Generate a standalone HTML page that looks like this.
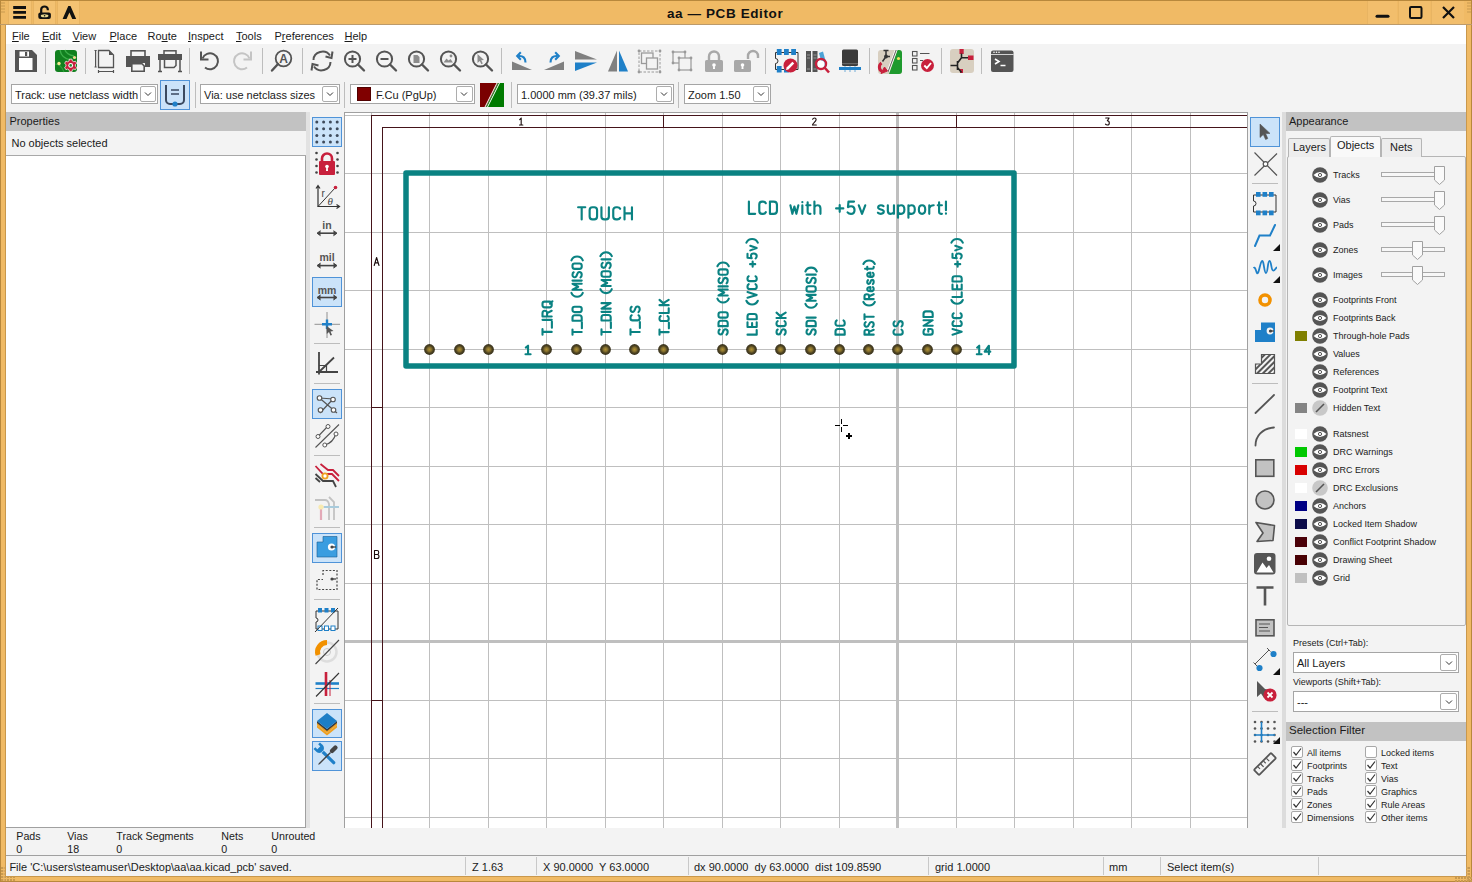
<!DOCTYPE html><html><head><meta charset="utf-8"><style>

*{box-sizing:border-box;margin:0;padding:0}
html,body{width:1472px;height:882px;overflow:hidden}
body{position:relative;background:#F0BA65;font-family:"Liberation Sans",sans-serif;font-size:11px;color:#1a1a1a}
.a{position:absolute}
.t{white-space:pre;line-height:1}
.u{text-decoration:underline;text-underline-offset:0.8px}

</style></head><body>
<div class="a" style="left:0px;top:0px;width:1472px;height:882px;border:1px solid #B8883C"></div><div class="a" style="left:0px;top:24px;width:1472px;height:1px;background:#BC9A6A"></div><div class="a" style="left:5px;top:25px;width:1px;height:852px;background:#C9984C"></div><div class="a" style="left:1466px;top:25px;width:1px;height:852px;background:#C9984C"></div><div class="a" style="left:5px;top:876px;width:1462px;height:1px;background:#C9984C"></div><div class="a t" style="left:667px;top:6.6px;font-weight:bold;font-size:13.5px;letter-spacing:0.6px;color:#111">aa — PCB Editor</div><div class="a" style="left:8px;top:1px;width:24px;height:23px;background:#F4C272;border-left:1px solid #E8B462;border-right:1px solid #E8B462"></div><div class="a" style="left:33px;top:1px;width:23px;height:23px;background:#F4C272;border-left:1px solid #E8B462;border-right:1px solid #E8B462"></div><div class="a" style="left:57px;top:1px;width:23px;height:23px;background:#F4C272;border-left:1px solid #E8B462;border-right:1px solid #E8B462"></div><div class="a" style="left:1367px;top:1px;width:30px;height:23px;background:#F2BE6C;border-left:1px solid #E8B462"></div><div class="a" style="left:1398px;top:1px;width:32px;height:23px;background:#F2BE6C;border-left:1px solid #E8B462"></div><div class="a" style="left:1431px;top:1px;width:33px;height:23px;background:#F2BE6C;border-left:1px solid #E8B462"></div><svg class="a" style="left:0;top:0" width="1472" height="25"><path d="M13.2 7.5 H26 M13.2 12.4 H26 M13.2 17.3 H26" stroke="#111" stroke-width="2.8"/><path d="M41.2 13 V9.5 A3.3 3 0 0 1 47.8 9.5 V10.3" fill="none" stroke="#111" stroke-width="2.2"/><rect x="38.3" y="12.6" width="12.6" height="6.4" rx="2" fill="#111"/><ellipse cx="44.6" cy="15.8" rx="3.8" ry="1.5" fill="#E8D890"/><circle cx="44.6" cy="15.8" r="0.8" fill="#111"/><path d="M62.6 19 L68.3 6 H70.5 L76.2 19 H72.3 L69.4 12.6 L66.5 19 Z" fill="#111"/><path d="M1377 16.3 H1388" stroke="#111" stroke-width="3" stroke-linecap="round"/><rect x="1410" y="7" width="11.5" height="11" rx="1.2" fill="none" stroke="#111" stroke-width="2"/><path d="M1443 7 L1454 18 M1454 7 L1443 18" stroke="#111" stroke-width="2.2"/><path d="M1 3 H5 M1 6 H5 M1 9 H5 M1 12 H5 M1467 3 H1471 M1467 6 H1471 M1467 9 H1471 M1467 12 H1471" stroke="#C89A50" stroke-width="1"/></svg><svg class="a" style="left:0;top:862px" width="1472" height="20"><rect x="1" y="14" width="2" height="2" fill="#C89A50"/><rect x="1" y="17" width="2" height="2" fill="#C89A50"/><rect x="4" y="14" width="2" height="2" fill="#C89A50"/><rect x="4" y="17" width="2" height="2" fill="#C89A50"/><rect x="7" y="14" width="2" height="2" fill="#C89A50"/><rect x="7" y="17" width="2" height="2" fill="#C89A50"/><rect x="10" y="14" width="2" height="2" fill="#C89A50"/><rect x="10" y="17" width="2" height="2" fill="#C89A50"/><rect x="13" y="14" width="2" height="2" fill="#C89A50"/><rect x="13" y="17" width="2" height="2" fill="#C89A50"/><rect x="1" y="5" width="2" height="2" fill="#C89A50"/><rect x="3.5" y="5" width="1.5" height="2" fill="#D8A860"/><rect x="1468" y="5" width="2" height="2" fill="#C89A50"/><rect x="1466.5" y="5" width="1.5" height="2" fill="#D8A860"/><rect x="1" y="8" width="2" height="2" fill="#C89A50"/><rect x="3.5" y="8" width="1.5" height="2" fill="#D8A860"/><rect x="1468" y="8" width="2" height="2" fill="#C89A50"/><rect x="1466.5" y="8" width="1.5" height="2" fill="#D8A860"/><rect x="1" y="11" width="2" height="2" fill="#C89A50"/><rect x="3.5" y="11" width="1.5" height="2" fill="#D8A860"/><rect x="1468" y="11" width="2" height="2" fill="#C89A50"/><rect x="1466.5" y="11" width="1.5" height="2" fill="#D8A860"/><rect x="1" y="14" width="2" height="2" fill="#C89A50"/><rect x="3.5" y="14" width="1.5" height="2" fill="#D8A860"/><rect x="1468" y="14" width="2" height="2" fill="#C89A50"/><rect x="1466.5" y="14" width="1.5" height="2" fill="#D8A860"/><rect x="1" y="17" width="2" height="2" fill="#C89A50"/><rect x="3.5" y="17" width="1.5" height="2" fill="#D8A860"/><rect x="1468" y="17" width="2" height="2" fill="#C89A50"/><rect x="1466.5" y="17" width="1.5" height="2" fill="#D8A860"/><rect x="1455" y="15" width="2" height="2" fill="#C89A50"/><rect x="1455" y="18" width="2" height="2" fill="#C89A50"/><rect x="1458" y="15" width="2" height="2" fill="#C89A50"/><rect x="1458" y="18" width="2" height="2" fill="#C89A50"/><rect x="1461" y="15" width="2" height="2" fill="#C89A50"/><rect x="1461" y="18" width="2" height="2" fill="#C89A50"/><rect x="1464" y="15" width="2" height="2" fill="#C89A50"/><rect x="1464" y="18" width="2" height="2" fill="#C89A50"/><rect x="1467" y="15" width="2" height="2" fill="#C89A50"/><rect x="1467" y="18" width="2" height="2" fill="#C89A50"/><rect x="1470" y="15" width="2" height="2" fill="#C89A50"/><rect x="1470" y="18" width="2" height="2" fill="#C89A50"/><rect x="1461" y="3" width="1.5" height="1.5" fill="#A8A8B0"/><rect x="1458" y="6" width="1.5" height="1.5" fill="#A8A8B0"/><rect x="1461" y="6" width="1.5" height="1.5" fill="#A8A8B0"/><rect x="1455" y="9" width="1.5" height="1.5" fill="#A8A8B0"/><rect x="1458" y="9" width="1.5" height="1.5" fill="#A8A8B0"/><rect x="1461" y="9" width="1.5" height="1.5" fill="#A8A8B0"/></svg>
<div class="a" style="left:6px;top:25px;width:1460px;height:19px;background:#fff"></div><div class="a t" style="left:12px;top:30.69px;font-size:11px;color:#1a1a1a;"><span class="u">F</span>ile</div><div class="a t" style="left:42px;top:30.69px;font-size:11px;color:#1a1a1a;"><span class="u">E</span>dit</div><div class="a t" style="left:72.5px;top:30.69px;font-size:11px;color:#1a1a1a;"><span class="u">V</span>iew</div><div class="a t" style="left:109.5px;top:30.69px;font-size:11px;color:#1a1a1a;"><span class="u">P</span>lace</div><div class="a t" style="left:147.5px;top:30.69px;font-size:11px;color:#1a1a1a;">Ro<span class="u">u</span>te</div><div class="a t" style="left:188px;top:30.69px;font-size:11px;color:#1a1a1a;"><span class="u">I</span>nspect</div><div class="a t" style="left:236px;top:30.69px;font-size:11px;color:#1a1a1a;"><span class="u">T</span>ools</div><div class="a t" style="left:274.5px;top:30.69px;font-size:11px;color:#1a1a1a;">P<span class="u">r</span>eferences</div><div class="a t" style="left:344.5px;top:30.69px;font-size:11px;color:#1a1a1a;"><span class="u">H</span>elp</div>
<div class="a" style="left:6px;top:44px;width:1460px;height:68px;background:#F3F3F3"></div><div class="a" style="left:11px;top:84px;width:147px;height:20px;background:#fff;border:1px solid #A5A5A5"></div><div class="a t" style="left:15px;top:90.29px;font-size:11px;color:#1a1a1a;">Track: use netclass width</div><div class="a" style="left:139.5px;top:86px;width:16.0px;height:16px;background:#fff;border:1px solid #ADADAD;border-radius:2px"></div><svg class="a" style="left:142.5px;top:90.0px" width="10" height="8"><path d="M2 2.5 L5 5.5 L8 2.5" fill="none" stroke="#333" stroke-width="1"/></svg><div class="a" style="left:200px;top:84px;width:140px;height:20px;background:#fff;border:1px solid #A5A5A5"></div><div class="a t" style="left:204px;top:90.29px;font-size:11px;color:#1a1a1a;">Via: use netclass sizes</div><div class="a" style="left:321.5px;top:86px;width:16.0px;height:16px;background:#fff;border:1px solid #ADADAD;border-radius:2px"></div><svg class="a" style="left:324.5px;top:90.0px" width="10" height="8"><path d="M2 2.5 L5 5.5 L8 2.5" fill="none" stroke="#333" stroke-width="1"/></svg><div class="a" style="left:350px;top:84px;width:125px;height:20px;background:#fff;border:1px solid #A5A5A5"></div><div class="a t" style="left:376px;top:90.29px;font-size:11px;color:#1a1a1a;">F.Cu (PgUp)</div><div class="a" style="left:456px;top:86px;width:16.5px;height:16px;background:#fff;border:1px solid #ADADAD;border-radius:2px"></div><svg class="a" style="left:459.25px;top:90.0px" width="10" height="8"><path d="M2 2.5 L5 5.5 L8 2.5" fill="none" stroke="#333" stroke-width="1"/></svg><div class="a" style="left:357px;top:87px;width:14px;height:14px;background:#800000;border:1px solid #500000"></div><div class="a" style="left:517px;top:84px;width:157px;height:20px;background:#fff;border:1px solid #A5A5A5"></div><div class="a t" style="left:521px;top:90.29px;font-size:11px;color:#1a1a1a;">1.0000 mm (39.37 mils)</div><div class="a" style="left:655.5px;top:86px;width:16.0px;height:16px;background:#fff;border:1px solid #ADADAD;border-radius:2px"></div><svg class="a" style="left:658.5px;top:90.0px" width="10" height="8"><path d="M2 2.5 L5 5.5 L8 2.5" fill="none" stroke="#333" stroke-width="1"/></svg><div class="a" style="left:684px;top:84px;width:87px;height:20px;background:#fff;border:1px solid #A5A5A5"></div><div class="a t" style="left:688px;top:90.29px;font-size:11px;color:#1a1a1a;">Zoom 1.50</div><div class="a" style="left:752.5px;top:86px;width:16.0px;height:16px;background:#fff;border:1px solid #ADADAD;border-radius:2px"></div><svg class="a" style="left:755.5px;top:90.0px" width="10" height="8"><path d="M2 2.5 L5 5.5 L8 2.5" fill="none" stroke="#333" stroke-width="1"/></svg>
<div class="a" style="left:6px;top:112px;width:300px;height:716px;background:#fff;border-right:1px solid #A0A0A0;border-bottom:1px solid #A0A0A0"></div><div class="a" style="left:6px;top:112px;width:300px;height:19px;background:#C2C2C2"></div><div class="a t" style="left:9.5px;top:115.69px;font-size:11px;color:#1a1a1a;">Properties</div><div class="a" style="left:6px;top:131px;width:300px;height:25px;background:#F3F3F3;border-bottom:1px solid #A8A8A8"></div><div class="a t" style="left:11.5px;top:137.69px;font-size:11px;color:#1a1a1a;">No objects selected</div><div class="a" style="left:306px;top:112px;width:4px;height:716px;background:#E2E2E2"></div><div class="a" style="left:310px;top:112px;width:34px;height:716px;background:#F3F3F3"></div>
<svg class="a" style="left:344px;top:112px" width="904" height="716" viewBox="344 112 904 716">
<rect x="344" y="112" width="904" height="716" fill="#fff"/>
<g shape-rendering="crispEdges" fill="#BFBFBF"><rect x="371" y="112" width="1" height="716"/><rect x="429" y="112" width="1" height="716"/><rect x="488" y="112" width="1" height="716"/><rect x="546" y="112" width="1" height="716"/><rect x="605" y="112" width="1" height="716"/><rect x="663" y="112" width="1" height="716"/><rect x="722" y="112" width="1" height="716"/><rect x="780" y="112" width="1" height="716"/><rect x="839" y="112" width="1" height="716"/><rect x="896" y="112" width="3" height="716"/><rect x="956" y="112" width="1" height="716"/><rect x="1014" y="112" width="1" height="716"/><rect x="1073" y="112" width="1" height="716"/><rect x="1131" y="112" width="1" height="716"/><rect x="1190" y="112" width="1" height="716"/><rect x="344" y="115" width="904" height="1"/><rect x="344" y="173" width="904" height="1"/><rect x="344" y="232" width="904" height="1"/><rect x="344" y="290" width="904" height="1"/><rect x="344" y="349" width="904" height="1"/><rect x="344" y="407" width="904" height="1"/><rect x="344" y="466" width="904" height="1"/><rect x="344" y="524" width="904" height="1"/><rect x="344" y="583" width="904" height="1"/><rect x="344" y="640" width="904" height="3"/><rect x="344" y="700" width="904" height="1"/><rect x="344" y="758" width="904" height="1"/><rect x="344" y="817" width="904" height="1"/></g>
<g shape-rendering="crispEdges" fill="#45141A"><rect x="371" y="115" width="877" height="1"/><rect x="382" y="127" width="866" height="1"/><rect x="371" y="115" width="1" height="713"/><rect x="382" y="127" width="1" height="701"/><rect x="663" y="115" width="1" height="12"/><rect x="956" y="115" width="1" height="12"/><rect x="371" y="407" width="12" height="1"/><rect x="371" y="700" width="12" height="1"/></g>
<g transform="translate(519.50,118.00) scale(0.7000,0.7000)" fill="none" stroke="#1a0a0a" stroke-width="1.1" stroke-linecap="round" stroke-linejoin="round"><path transform="translate(0.00,0)" d="M0.3 2.3L2.4 0V10M0 10H4.8" vector-effect="non-scaling-stroke"/></g>
<g transform="translate(812.50,118.00) scale(0.7000,0.7000)" fill="none" stroke="#1a0a0a" stroke-width="1.1" stroke-linecap="round" stroke-linejoin="round"><path transform="translate(0.00,0)" d="M0.2 1.8C0.7 0.6 1.6 0 2.8 0C4.3 0 5.2 1 5.2 2.6C5.2 5 0 7.5 0 10H5.4" vector-effect="non-scaling-stroke"/></g>
<g transform="translate(1105.50,118.00) scale(0.7000,0.7000)" fill="none" stroke="#1a0a0a" stroke-width="1.1" stroke-linecap="round" stroke-linejoin="round"><path transform="translate(0.00,0)" d="M0.3 0H5.2L2.6 4C4.3 4 5.4 5 5.4 7C5.4 9 4.3 10 2.7 10C1.5 10 0.6 9.6 0 8.8" vector-effect="non-scaling-stroke"/></g>
<g transform="translate(374.20,257.50) scale(0.8000,0.8000)" fill="none" stroke="#1a0a0a" stroke-width="1.1" stroke-linecap="round" stroke-linejoin="round"><path transform="translate(0.00,0)" d="M0 10L3 0L6 10M1 6.7H5" vector-effect="non-scaling-stroke"/></g>
<g transform="translate(374.50,550.50) scale(0.8000,0.8000)" fill="none" stroke="#1a0a0a" stroke-width="1.1" stroke-linecap="round" stroke-linejoin="round"><path transform="translate(0.00,0)" d="M0 0H3.2C4.6 0 5.3 0.8 5.3 2.4C5.3 4 4.6 5 3.2 5H0M3.2 5C4.8 5 5.6 5.9 5.6 7.5C5.6 9.1 4.8 10 3.2 10H0V0" vector-effect="non-scaling-stroke"/></g>
<rect x="406" y="173" width="608" height="193" fill="none" stroke="#0A8282" stroke-width="5.5" stroke-linejoin="round"/>
<defs><radialGradient id="pg"><stop offset="0" stop-color="#B09030"/><stop offset="0.35" stop-color="#8A7430"/><stop offset="0.7" stop-color="#4A4020"/><stop offset="1" stop-color="#3A3420"/></radialGradient></defs>
<g fill="url(#pg)"><circle cx="429.5" cy="349.5" r="5.4"/><circle cx="459.5" cy="349.5" r="5.4"/><circle cx="488.5" cy="349.5" r="5.4"/><circle cx="546.5" cy="349.5" r="5.4"/><circle cx="576.5" cy="349.5" r="5.4"/><circle cx="605.5" cy="349.5" r="5.4"/><circle cx="634.5" cy="349.5" r="5.4"/><circle cx="663.5" cy="349.5" r="5.4"/><circle cx="722.5" cy="349.5" r="5.4"/><circle cx="751.5" cy="349.5" r="5.4"/><circle cx="780.5" cy="349.5" r="5.4"/><circle cx="810.5" cy="349.5" r="5.4"/><circle cx="839.5" cy="349.5" r="5.4"/><circle cx="868.5" cy="349.5" r="5.4"/><circle cx="897.5" cy="349.5" r="5.4"/><circle cx="927.5" cy="349.5" r="5.4"/><circle cx="956.5" cy="349.5" r="5.4"/></g>
<g transform="translate(578.10,207.20) scale(1.3264,1.2200)" fill="none" stroke="#0A8282" stroke-width="2.15" stroke-linecap="round" stroke-linejoin="round"><path transform="translate(0.00,0)" d="M0 0H5.4M2.7 0V10" vector-effect="non-scaling-stroke"/><path transform="translate(8.70,0)" d="M2.1 0H3.5C4.9 0 5.6 0.8 5.6 2.3V7.7C5.6 9.2 4.9 10 3.5 10H2.1C0.7 10 0 9.2 0 7.7V2.3C0 0.8 0.7 0 2.1 0Z" vector-effect="non-scaling-stroke"/><path transform="translate(17.60,0)" d="M0 0V7.7C0 9.2 0.8 10 2.2 10H3.4C4.8 10 5.6 9.2 5.6 7.7V0" vector-effect="non-scaling-stroke"/><path transform="translate(26.50,0)" d="M5.2 1.3C4.8 0.4 4 0 3 0H2.2C0.9 0 0 0.9 0 2.3V7.7C0 9.1 0.9 10 2.2 10H3C4 10 4.8 9.6 5.2 8.7" vector-effect="non-scaling-stroke"/><path transform="translate(35.00,0)" d="M0 0V10M5.6 0V10M0 5H5.6" vector-effect="non-scaling-stroke"/></g><g transform="translate(748.90,201.60) scale(1.2522,1.2200)" fill="none" stroke="#0A8282" stroke-width="2.15" stroke-linecap="round" stroke-linejoin="round"><path transform="translate(0.00,0)" d="M0 0V10H5" vector-effect="non-scaling-stroke"/><path transform="translate(8.30,0)" d="M5.2 1.3C4.8 0.4 4 0 3 0H2.2C0.9 0 0 0.9 0 2.3V7.7C0 9.1 0.9 10 2.2 10H3C4 10 4.8 9.6 5.2 8.7" vector-effect="non-scaling-stroke"/><path transform="translate(16.80,0)" d="M0 0H3C4.6 0 5.6 1 5.6 2.6V7.4C5.6 9 4.6 10 3 10H0Z" vector-effect="non-scaling-stroke"/></g><g transform="translate(790.40,201.60) scale(1.2068,1.2200)" fill="none" stroke="#0A8282" stroke-width="2.15" stroke-linecap="round" stroke-linejoin="round"><path transform="translate(0.00,0)" d="M0 3L1.65 10L3.3 4L4.95 10L6.6 3" vector-effect="non-scaling-stroke"/><path transform="translate(9.90,0)" d="M0 3V10M0 0.3V0.5" vector-effect="non-scaling-stroke"/><path transform="translate(13.20,0)" d="M1.1 0.6V8.4C1.1 9.5 1.6 10 2.6 10H3.4M0 3H3.4" vector-effect="non-scaling-stroke"/><path transform="translate(19.90,0)" d="M0 0V10M0 4.6C0.6 3.5 1.5 3 2.6 3C4.2 3 5 4 5 5.6V10" vector-effect="non-scaling-stroke"/></g><g transform="translate(836.10,201.60) scale(1.2898,1.2200)" fill="none" stroke="#0A8282" stroke-width="2.15" stroke-linecap="round" stroke-linejoin="round"><path transform="translate(0.00,0)" d="M0 5.6H5.6M2.8 2.8V8.4" vector-effect="non-scaling-stroke"/><path transform="translate(8.90,0)" d="M5 0H0.7L0.3 4.6C0.9 4.1 1.7 3.8 2.8 3.8C4.5 3.8 5.4 4.9 5.4 6.8C5.4 8.8 4.4 10 2.6 10C1.5 10 0.6 9.6 0 8.8" vector-effect="non-scaling-stroke"/><path transform="translate(17.60,0)" d="M0 3L2.5 10L5 3" vector-effect="non-scaling-stroke"/></g><g transform="translate(877.90,201.60) scale(1.2261,1.2200)" fill="none" stroke="#0A8282" stroke-width="2.15" stroke-linecap="round" stroke-linejoin="round"><path transform="translate(0.00,0)" d="M4.6 3.8C4.1 3.2 3.4 3 2.4 3C1.1 3 0.2 3.6 0.2 4.8C0.2 7 4.8 6 4.8 8.2C4.8 9.4 3.8 10 2.4 10C1.4 10 0.6 9.7 0 9.1" vector-effect="non-scaling-stroke"/><path transform="translate(8.10,0)" d="M0 3V7.4C0 9.2 0.8 10 2.3 10C3.5 10 4.5 9.5 5 8.4M5 3V10" vector-effect="non-scaling-stroke"/><path transform="translate(16.40,0)" d="M0 3V13.2M0 4.2C0.6 3.4 1.4 3 2.5 3C4.2 3 5.2 4.3 5.2 6.5C5.2 8.8 4.2 10 2.5 10C1.4 10 0.6 9.6 0 8.8" vector-effect="non-scaling-stroke"/><path transform="translate(24.90,0)" d="M0 3V13.2M0 4.2C0.6 3.4 1.4 3 2.5 3C4.2 3 5.2 4.3 5.2 6.5C5.2 8.8 4.2 10 2.5 10C1.4 10 0.6 9.6 0 8.8" vector-effect="non-scaling-stroke"/><path transform="translate(33.40,0)" d="M2.6 3C4.2 3 5.2 4.3 5.2 6.5C5.2 8.7 4.2 10 2.6 10C1 10 0 8.7 0 6.5C0 4.3 1 3 2.6 3Z" vector-effect="non-scaling-stroke"/><path transform="translate(41.90,0)" d="M0 3V10M0 5.4C0.6 3.8 1.8 3 3.6 3" vector-effect="non-scaling-stroke"/><path transform="translate(48.80,0)" d="M1.1 0.6V8.4C1.1 9.5 1.6 10 2.6 10H3.4M0 3H3.4" vector-effect="non-scaling-stroke"/><path transform="translate(55.50,0)" d="M0 0V7M0 9.7V9.9" vector-effect="non-scaling-stroke"/></g><g transform="translate(525.50,345.70) scale(1.0652,0.8500)" fill="none" stroke="#0A8282" stroke-width="2.1" stroke-linecap="round" stroke-linejoin="round"><path transform="translate(0.00,0)" d="M0.3 2.3L2.4 0V10M0 10H4.8" vector-effect="non-scaling-stroke"/></g><g transform="translate(976.80,345.70) scale(1.0000,0.8500)" fill="none" stroke="#0A8282" stroke-width="2.1" stroke-linecap="round" stroke-linejoin="round"><path transform="translate(0.00,0)" d="M0.3 2.3L2.4 0V10M0 10H4.8" vector-effect="non-scaling-stroke"/><path transform="translate(7.90,0)" d="M4.2 10V0L0 7H5.6" vector-effect="non-scaling-stroke"/></g><g transform="translate(542.50,334.65) rotate(-90) scale(1.0217,0.9200)" fill="none" stroke="#0A8282" stroke-width="2.1" stroke-linecap="round" stroke-linejoin="round"><path transform="translate(0.00,0)" d="M0 0H5.4M2.7 0V10" vector-effect="non-scaling-stroke"/><path transform="translate(6.70,0)" d="M0 10.2H6" vector-effect="non-scaling-stroke"/><path transform="translate(14.50,0)" d="M0 0V10" vector-effect="non-scaling-stroke"/><path transform="translate(17.80,0)" d="M0 10V0H3.2C4.7 0 5.6 1 5.6 2.5C5.6 4 4.7 5 3.2 5H0M3.2 5L5.6 10" vector-effect="non-scaling-stroke"/><path transform="translate(26.70,0)" d="M2.1 0H3.5C4.9 0 5.6 0.8 5.6 2.3V7.7C5.6 9.2 4.9 10 3.5 10H2.1C0.7 10 0 9.2 0 7.7V2.3C0 0.8 0.7 0 2.1 0ZM3.6 8.2L5.9 10.8" vector-effect="non-scaling-stroke"/></g><g transform="translate(572.50,334.65) rotate(-90) scale(0.9631,0.9200)" fill="none" stroke="#0A8282" stroke-width="2.1" stroke-linecap="round" stroke-linejoin="round"><path transform="translate(0.00,0)" d="M0 0H5.4M2.7 0V10" vector-effect="non-scaling-stroke"/><path transform="translate(6.70,0)" d="M0 10.2H6" vector-effect="non-scaling-stroke"/><path transform="translate(14.50,0)" d="M0 0H3C4.6 0 5.6 1 5.6 2.6V7.4C5.6 9 4.6 10 3 10H0Z" vector-effect="non-scaling-stroke"/><path transform="translate(23.40,0)" d="M2.1 0H3.5C4.9 0 5.6 0.8 5.6 2.3V7.7C5.6 9.2 4.9 10 3.5 10H2.1C0.7 10 0 9.2 0 7.7V2.3C0 0.8 0.7 0 2.1 0Z" vector-effect="non-scaling-stroke"/><path transform="translate(39.30,0)" d="M4 -1.2A6.8 6.8 0 0 0 4 11.2" vector-effect="non-scaling-stroke"/><path transform="translate(46.60,0)" d="M0 10V0L3.1 6.2L6.2 0V10" vector-effect="non-scaling-stroke"/><path transform="translate(56.10,0)" d="M0 0V10" vector-effect="non-scaling-stroke"/><path transform="translate(59.40,0)" d="M5.4 1.3C4.9 0.4 4 0 2.8 0C1.1 0 0.2 1 0.2 2.5C0.2 5.5 5.6 4.3 5.6 7.4C5.6 9 4.6 10 2.8 10C1.6 10 0.6 9.6 0 8.7" vector-effect="non-scaling-stroke"/><path transform="translate(68.30,0)" d="M2.1 0H3.5C4.9 0 5.6 0.8 5.6 2.3V7.7C5.6 9.2 4.9 10 3.5 10H2.1C0.7 10 0 9.2 0 7.7V2.3C0 0.8 0.7 0 2.1 0Z" vector-effect="non-scaling-stroke"/><path transform="translate(77.20,0)" d="M0 -1.2A6.8 6.8 0 0 1 0 11.2" vector-effect="non-scaling-stroke"/></g><g transform="translate(601.50,334.65) rotate(-90) scale(0.9751,0.9200)" fill="none" stroke="#0A8282" stroke-width="2.1" stroke-linecap="round" stroke-linejoin="round"><path transform="translate(0.00,0)" d="M0 0H5.4M2.7 0V10" vector-effect="non-scaling-stroke"/><path transform="translate(6.70,0)" d="M0 10.2H6" vector-effect="non-scaling-stroke"/><path transform="translate(14.50,0)" d="M0 0H3C4.6 0 5.6 1 5.6 2.6V7.4C5.6 9 4.6 10 3 10H0Z" vector-effect="non-scaling-stroke"/><path transform="translate(23.40,0)" d="M0 0V10" vector-effect="non-scaling-stroke"/><path transform="translate(26.70,0)" d="M0 10V0L5.6 10V0" vector-effect="non-scaling-stroke"/><path transform="translate(42.60,0)" d="M4 -1.2A6.8 6.8 0 0 0 4 11.2" vector-effect="non-scaling-stroke"/><path transform="translate(49.90,0)" d="M0 10V0L3.1 6.2L6.2 0V10" vector-effect="non-scaling-stroke"/><path transform="translate(59.40,0)" d="M2.1 0H3.5C4.9 0 5.6 0.8 5.6 2.3V7.7C5.6 9.2 4.9 10 3.5 10H2.1C0.7 10 0 9.2 0 7.7V2.3C0 0.8 0.7 0 2.1 0Z" vector-effect="non-scaling-stroke"/><path transform="translate(68.30,0)" d="M5.4 1.3C4.9 0.4 4 0 2.8 0C1.1 0 0.2 1 0.2 2.5C0.2 5.5 5.6 4.3 5.6 7.4C5.6 9 4.6 10 2.8 10C1.6 10 0.6 9.6 0 8.7" vector-effect="non-scaling-stroke"/><path transform="translate(77.20,0)" d="M0 0V10" vector-effect="non-scaling-stroke"/><path transform="translate(80.50,0)" d="M0 -1.2A6.8 6.8 0 0 1 0 11.2" vector-effect="non-scaling-stroke"/></g><g transform="translate(630.50,334.65) rotate(-90) scale(0.9825,0.9200)" fill="none" stroke="#0A8282" stroke-width="2.1" stroke-linecap="round" stroke-linejoin="round"><path transform="translate(0.00,0)" d="M0 0H5.4M2.7 0V10" vector-effect="non-scaling-stroke"/><path transform="translate(6.70,0)" d="M0 10.2H6" vector-effect="non-scaling-stroke"/><path transform="translate(14.50,0)" d="M5.2 1.3C4.8 0.4 4 0 3 0H2.2C0.9 0 0 0.9 0 2.3V7.7C0 9.1 0.9 10 2.2 10H3C4 10 4.8 9.6 5.2 8.7" vector-effect="non-scaling-stroke"/><path transform="translate(23.00,0)" d="M5.4 1.3C4.9 0.4 4 0 2.8 0C1.1 0 0.2 1 0.2 2.5C0.2 5.5 5.6 4.3 5.6 7.4C5.6 9 4.6 10 2.8 10C1.6 10 0.6 9.6 0 8.7" vector-effect="non-scaling-stroke"/></g><g transform="translate(659.50,334.65) rotate(-90) scale(0.9431,0.9200)" fill="none" stroke="#0A8282" stroke-width="2.1" stroke-linecap="round" stroke-linejoin="round"><path transform="translate(0.00,0)" d="M0 0H5.4M2.7 0V10" vector-effect="non-scaling-stroke"/><path transform="translate(6.70,0)" d="M0 10.2H6" vector-effect="non-scaling-stroke"/><path transform="translate(14.50,0)" d="M5.2 1.3C4.8 0.4 4 0 3 0H2.2C0.9 0 0 0.9 0 2.3V7.7C0 9.1 0.9 10 2.2 10H3C4 10 4.8 9.6 5.2 8.7" vector-effect="non-scaling-stroke"/><path transform="translate(23.00,0)" d="M0 0V10H5" vector-effect="non-scaling-stroke"/><path transform="translate(31.30,0)" d="M0 0V10M5.6 0L0 6.4M2.1 4.2L5.6 10" vector-effect="non-scaling-stroke"/></g><g transform="translate(718.50,334.65) rotate(-90) scale(0.9550,0.9200)" fill="none" stroke="#0A8282" stroke-width="2.1" stroke-linecap="round" stroke-linejoin="round"><path transform="translate(0.00,0)" d="M5.4 1.3C4.9 0.4 4 0 2.8 0C1.1 0 0.2 1 0.2 2.5C0.2 5.5 5.6 4.3 5.6 7.4C5.6 9 4.6 10 2.8 10C1.6 10 0.6 9.6 0 8.7" vector-effect="non-scaling-stroke"/><path transform="translate(8.90,0)" d="M0 0H3C4.6 0 5.6 1 5.6 2.6V7.4C5.6 9 4.6 10 3 10H0Z" vector-effect="non-scaling-stroke"/><path transform="translate(17.80,0)" d="M2.1 0H3.5C4.9 0 5.6 0.8 5.6 2.3V7.7C5.6 9.2 4.9 10 3.5 10H2.1C0.7 10 0 9.2 0 7.7V2.3C0 0.8 0.7 0 2.1 0Z" vector-effect="non-scaling-stroke"/><path transform="translate(33.70,0)" d="M4 -1.2A6.8 6.8 0 0 0 4 11.2" vector-effect="non-scaling-stroke"/><path transform="translate(41.00,0)" d="M0 10V0L3.1 6.2L6.2 0V10" vector-effect="non-scaling-stroke"/><path transform="translate(50.50,0)" d="M0 0V10" vector-effect="non-scaling-stroke"/><path transform="translate(53.80,0)" d="M5.4 1.3C4.9 0.4 4 0 2.8 0C1.1 0 0.2 1 0.2 2.5C0.2 5.5 5.6 4.3 5.6 7.4C5.6 9 4.6 10 2.8 10C1.6 10 0.6 9.6 0 8.7" vector-effect="non-scaling-stroke"/><path transform="translate(62.70,0)" d="M2.1 0H3.5C4.9 0 5.6 0.8 5.6 2.3V7.7C5.6 9.2 4.9 10 3.5 10H2.1C0.7 10 0 9.2 0 7.7V2.3C0 0.8 0.7 0 2.1 0Z" vector-effect="non-scaling-stroke"/><path transform="translate(71.60,0)" d="M0 -1.2A6.8 6.8 0 0 1 0 11.2" vector-effect="non-scaling-stroke"/></g><g transform="translate(747.50,334.65) rotate(-90) scale(0.9291,0.9200)" fill="none" stroke="#0A8282" stroke-width="2.1" stroke-linecap="round" stroke-linejoin="round"><path transform="translate(0.00,0)" d="M0 0V10H5" vector-effect="non-scaling-stroke"/><path transform="translate(8.30,0)" d="M5 0H0V10H5M0 5H4.2" vector-effect="non-scaling-stroke"/><path transform="translate(16.60,0)" d="M0 0H3C4.6 0 5.6 1 5.6 2.6V7.4C5.6 9 4.6 10 3 10H0Z" vector-effect="non-scaling-stroke"/><path transform="translate(32.50,0)" d="M4 -1.2A6.8 6.8 0 0 0 4 11.2" vector-effect="non-scaling-stroke"/><path transform="translate(39.80,0)" d="M0 0L3 10L6 0" vector-effect="non-scaling-stroke"/><path transform="translate(49.10,0)" d="M5.2 1.3C4.8 0.4 4 0 3 0H2.2C0.9 0 0 0.9 0 2.3V7.7C0 9.1 0.9 10 2.2 10H3C4 10 4.8 9.6 5.2 8.7" vector-effect="non-scaling-stroke"/><path transform="translate(57.60,0)" d="M5.2 1.3C4.8 0.4 4 0 3 0H2.2C0.9 0 0 0.9 0 2.3V7.7C0 9.1 0.9 10 2.2 10H3C4 10 4.8 9.6 5.2 8.7" vector-effect="non-scaling-stroke"/><path transform="translate(73.10,0)" d="M0 5.6H5.6M2.8 2.8V8.4" vector-effect="non-scaling-stroke"/><path transform="translate(82.00,0)" d="M5 0H0.7L0.3 4.6C0.9 4.1 1.7 3.8 2.8 3.8C4.5 3.8 5.4 4.9 5.4 6.8C5.4 8.8 4.4 10 2.6 10C1.5 10 0.6 9.6 0 8.8" vector-effect="non-scaling-stroke"/><path transform="translate(90.70,0)" d="M0 3L2.5 10L5 3" vector-effect="non-scaling-stroke"/><path transform="translate(99.00,0)" d="M0 -1.2A6.8 6.8 0 0 1 0 11.2" vector-effect="non-scaling-stroke"/></g><g transform="translate(776.50,334.65) rotate(-90) scale(0.9565,0.9200)" fill="none" stroke="#0A8282" stroke-width="2.1" stroke-linecap="round" stroke-linejoin="round"><path transform="translate(0.00,0)" d="M5.4 1.3C4.9 0.4 4 0 2.8 0C1.1 0 0.2 1 0.2 2.5C0.2 5.5 5.6 4.3 5.6 7.4C5.6 9 4.6 10 2.8 10C1.6 10 0.6 9.6 0 8.7" vector-effect="non-scaling-stroke"/><path transform="translate(8.90,0)" d="M5.2 1.3C4.8 0.4 4 0 3 0H2.2C0.9 0 0 0.9 0 2.3V7.7C0 9.1 0.9 10 2.2 10H3C4 10 4.8 9.6 5.2 8.7" vector-effect="non-scaling-stroke"/><path transform="translate(17.40,0)" d="M0 0V10M5.6 0L0 6.4M2.1 4.2L5.6 10" vector-effect="non-scaling-stroke"/></g><g transform="translate(806.50,334.65) rotate(-90) scale(0.9571,0.9200)" fill="none" stroke="#0A8282" stroke-width="2.1" stroke-linecap="round" stroke-linejoin="round"><path transform="translate(0.00,0)" d="M5.4 1.3C4.9 0.4 4 0 2.8 0C1.1 0 0.2 1 0.2 2.5C0.2 5.5 5.6 4.3 5.6 7.4C5.6 9 4.6 10 2.8 10C1.6 10 0.6 9.6 0 8.7" vector-effect="non-scaling-stroke"/><path transform="translate(8.90,0)" d="M0 0H3C4.6 0 5.6 1 5.6 2.6V7.4C5.6 9 4.6 10 3 10H0Z" vector-effect="non-scaling-stroke"/><path transform="translate(17.80,0)" d="M0 0V10" vector-effect="non-scaling-stroke"/><path transform="translate(28.10,0)" d="M4 -1.2A6.8 6.8 0 0 0 4 11.2" vector-effect="non-scaling-stroke"/><path transform="translate(35.40,0)" d="M0 10V0L3.1 6.2L6.2 0V10" vector-effect="non-scaling-stroke"/><path transform="translate(44.90,0)" d="M2.1 0H3.5C4.9 0 5.6 0.8 5.6 2.3V7.7C5.6 9.2 4.9 10 3.5 10H2.1C0.7 10 0 9.2 0 7.7V2.3C0 0.8 0.7 0 2.1 0Z" vector-effect="non-scaling-stroke"/><path transform="translate(53.80,0)" d="M5.4 1.3C4.9 0.4 4 0 2.8 0C1.1 0 0.2 1 0.2 2.5C0.2 5.5 5.6 4.3 5.6 7.4C5.6 9 4.6 10 2.8 10C1.6 10 0.6 9.6 0 8.7" vector-effect="non-scaling-stroke"/><path transform="translate(62.70,0)" d="M0 0V10" vector-effect="non-scaling-stroke"/><path transform="translate(66.00,0)" d="M0 -1.2A6.8 6.8 0 0 1 0 11.2" vector-effect="non-scaling-stroke"/></g><g transform="translate(835.50,334.65) rotate(-90) scale(1.0071,0.9200)" fill="none" stroke="#0A8282" stroke-width="2.1" stroke-linecap="round" stroke-linejoin="round"><path transform="translate(0.00,0)" d="M0 0H3C4.6 0 5.6 1 5.6 2.6V7.4C5.6 9 4.6 10 3 10H0Z" vector-effect="non-scaling-stroke"/><path transform="translate(8.90,0)" d="M5.2 1.3C4.8 0.4 4 0 3 0H2.2C0.9 0 0 0.9 0 2.3V7.7C0 9.1 0.9 10 2.2 10H3C4 10 4.8 9.6 5.2 8.7" vector-effect="non-scaling-stroke"/></g><g transform="translate(864.50,334.65) rotate(-90) scale(0.8719,0.9200)" fill="none" stroke="#0A8282" stroke-width="2.1" stroke-linecap="round" stroke-linejoin="round"><path transform="translate(0.00,0)" d="M0 10V0H3.2C4.7 0 5.6 1 5.6 2.5C5.6 4 4.7 5 3.2 5H0M3.2 5L5.6 10" vector-effect="non-scaling-stroke"/><path transform="translate(8.90,0)" d="M5.4 1.3C4.9 0.4 4 0 2.8 0C1.1 0 0.2 1 0.2 2.5C0.2 5.5 5.6 4.3 5.6 7.4C5.6 9 4.6 10 2.8 10C1.6 10 0.6 9.6 0 8.7" vector-effect="non-scaling-stroke"/><path transform="translate(17.80,0)" d="M0 0H5.4M2.7 0V10" vector-effect="non-scaling-stroke"/><path transform="translate(33.50,0)" d="M4 -1.2A6.8 6.8 0 0 0 4 11.2" vector-effect="non-scaling-stroke"/><path transform="translate(40.80,0)" d="M0 10V0H3.2C4.7 0 5.6 1 5.6 2.5C5.6 4 4.7 5 3.2 5H0M3.2 5L5.6 10" vector-effect="non-scaling-stroke"/><path transform="translate(49.70,0)" d="M0.1 6.4H5C5 4.2 4.1 3 2.6 3C1 3 0 4.3 0 6.5C0 8.8 1 10 2.7 10C3.7 10 4.4 9.7 4.9 9.1" vector-effect="non-scaling-stroke"/><path transform="translate(58.00,0)" d="M4.6 3.8C4.1 3.2 3.4 3 2.4 3C1.1 3 0.2 3.6 0.2 4.8C0.2 7 4.8 6 4.8 8.2C4.8 9.4 3.8 10 2.4 10C1.4 10 0.6 9.7 0 9.1" vector-effect="non-scaling-stroke"/><path transform="translate(66.10,0)" d="M0.1 6.4H5C5 4.2 4.1 3 2.6 3C1 3 0 4.3 0 6.5C0 8.8 1 10 2.7 10C3.7 10 4.4 9.7 4.9 9.1" vector-effect="non-scaling-stroke"/><path transform="translate(74.40,0)" d="M1.1 0.6V8.4C1.1 9.5 1.6 10 2.6 10H3.4M0 3H3.4" vector-effect="non-scaling-stroke"/><path transform="translate(81.10,0)" d="M0 -1.2A6.8 6.8 0 0 1 0 11.2" vector-effect="non-scaling-stroke"/></g><g transform="translate(893.50,334.65) rotate(-90) scale(0.9574,0.9200)" fill="none" stroke="#0A8282" stroke-width="2.1" stroke-linecap="round" stroke-linejoin="round"><path transform="translate(0.00,0)" d="M5.2 1.3C4.8 0.4 4 0 3 0H2.2C0.9 0 0 0.9 0 2.3V7.7C0 9.1 0.9 10 2.2 10H3C4 10 4.8 9.6 5.2 8.7" vector-effect="non-scaling-stroke"/><path transform="translate(8.50,0)" d="M5.4 1.3C4.9 0.4 4 0 2.8 0C1.1 0 0.2 1 0.2 2.5C0.2 5.5 5.6 4.3 5.6 7.4C5.6 9 4.6 10 2.8 10C1.6 10 0.6 9.6 0 8.7" vector-effect="non-scaling-stroke"/></g><g transform="translate(923.50,334.65) rotate(-90) scale(0.9957,0.9200)" fill="none" stroke="#0A8282" stroke-width="2.1" stroke-linecap="round" stroke-linejoin="round"><path transform="translate(0.00,0)" d="M5.4 1.4C5 0.5 4.2 0 3 0H2.2C0.9 0 0 0.9 0 2.3V7.7C0 9.1 0.9 10 2.2 10H3.4C4.7 10 5.6 9.1 5.6 7.7V5.2H3" vector-effect="non-scaling-stroke"/><path transform="translate(8.90,0)" d="M0 10V0L5.6 10V0" vector-effect="non-scaling-stroke"/><path transform="translate(17.80,0)" d="M0 0H3C4.6 0 5.6 1 5.6 2.6V7.4C5.6 9 4.6 10 3 10H0Z" vector-effect="non-scaling-stroke"/></g><g transform="translate(952.50,334.65) rotate(-90) scale(0.9291,0.9200)" fill="none" stroke="#0A8282" stroke-width="2.1" stroke-linecap="round" stroke-linejoin="round"><path transform="translate(0.00,0)" d="M0 0L3 10L6 0" vector-effect="non-scaling-stroke"/><path transform="translate(9.30,0)" d="M5.2 1.3C4.8 0.4 4 0 3 0H2.2C0.9 0 0 0.9 0 2.3V7.7C0 9.1 0.9 10 2.2 10H3C4 10 4.8 9.6 5.2 8.7" vector-effect="non-scaling-stroke"/><path transform="translate(17.80,0)" d="M5.2 1.3C4.8 0.4 4 0 3 0H2.2C0.9 0 0 0.9 0 2.3V7.7C0 9.1 0.9 10 2.2 10H3C4 10 4.8 9.6 5.2 8.7" vector-effect="non-scaling-stroke"/><path transform="translate(33.30,0)" d="M4 -1.2A6.8 6.8 0 0 0 4 11.2" vector-effect="non-scaling-stroke"/><path transform="translate(40.60,0)" d="M0 0V10H5" vector-effect="non-scaling-stroke"/><path transform="translate(48.90,0)" d="M5 0H0V10H5M0 5H4.2" vector-effect="non-scaling-stroke"/><path transform="translate(57.20,0)" d="M0 0H3C4.6 0 5.6 1 5.6 2.6V7.4C5.6 9 4.6 10 3 10H0Z" vector-effect="non-scaling-stroke"/><path transform="translate(73.10,0)" d="M0 5.6H5.6M2.8 2.8V8.4" vector-effect="non-scaling-stroke"/><path transform="translate(82.00,0)" d="M5 0H0.7L0.3 4.6C0.9 4.1 1.7 3.8 2.8 3.8C4.5 3.8 5.4 4.9 5.4 6.8C5.4 8.8 4.4 10 2.6 10C1.5 10 0.6 9.6 0 8.8" vector-effect="non-scaling-stroke"/><path transform="translate(90.70,0)" d="M0 3L2.5 10L5 3" vector-effect="non-scaling-stroke"/><path transform="translate(99.00,0)" d="M0 -1.2A6.8 6.8 0 0 1 0 11.2" vector-effect="non-scaling-stroke"/></g>
<g fill="#000" shape-rendering="crispEdges"><rect x="835" y="424.7" width="5" height="1.3"/><rect x="843.2" y="424.7" width="5" height="1.3"/><rect x="840.9" y="418.8" width="1.3" height="5"/><rect x="840.9" y="427" width="1.3" height="5"/><rect x="846" y="435" width="6" height="2"/><rect x="848" y="433" width="2" height="6"/></g>
</svg>
<div class="a" style="left:344px;top:112px;width:904px;height:717px;border-left:1px solid #A0A0A0;border-top:1px solid #A0A0A0;border-bottom:1px solid #A0A0A0;border-right:1px solid #A0A0A0"></div>
<div class="a" style="left:1248px;top:112px;width:34px;height:716px;background:#F3F3F3"></div><div class="a" style="left:1282px;top:112px;width:4px;height:716px;background:#DCDCDC"></div><div class="a" style="left:1286px;top:112px;width:180px;height:716px;background:#F3F3F3"></div><div class="a" style="left:1286px;top:112px;width:180px;height:19px;background:#C2C2C2"></div><div class="a t" style="left:1289px;top:115.69px;font-size:11px;color:#1a1a1a;">Appearance</div><div class="a" style="left:1287px;top:156px;width:179px;height:470px;background:#F3F3F3;border:1px solid #B5B5B5;border-radius:2px"></div><div class="a" style="left:1288px;top:138px;width:42px;height:19px;background:#EDEDED;border:1px solid #B5B5B5;border-bottom:none;border-radius:2px 2px 0 0"></div><div class="a" style="left:1381px;top:138px;width:41px;height:19px;background:#EDEDED;border:1px solid #B5B5B5;border-bottom:none;border-radius:2px 2px 0 0"></div><div class="a" style="left:1330px;top:136px;width:51px;height:21px;background:#F9F9F9;border:1px solid #B5B5B5;border-bottom:none;border-radius:2px 2px 0 0"></div><div class="a t" style="left:1293px;top:141.69px;font-size:11px;color:#1a1a1a;">Layers</div><div class="a t" style="left:1337px;top:140.49px;font-size:11px;color:#1a1a1a;">Objects</div><div class="a t" style="left:1390px;top:141.69px;font-size:11px;color:#1a1a1a;">Nets</div><div class="a t" style="left:1333px;top:170.88px;font-size:9px;color:#1a1a1a;">Tracks</div><div class="a t" style="left:1333px;top:195.88px;font-size:9px;color:#1a1a1a;">Vias</div><div class="a t" style="left:1333px;top:220.88px;font-size:9px;color:#1a1a1a;">Pads</div><div class="a t" style="left:1333px;top:245.88px;font-size:9px;color:#1a1a1a;">Zones</div><div class="a t" style="left:1333px;top:270.88px;font-size:9px;color:#1a1a1a;">Images</div><div class="a t" style="left:1333px;top:295.88px;font-size:9px;color:#1a1a1a;">Footprints Front</div><div class="a t" style="left:1333px;top:313.88px;font-size:9px;color:#1a1a1a;">Footprints Back</div><div class="a t" style="left:1333px;top:331.88px;font-size:9px;color:#1a1a1a;">Through-hole Pads</div><div class="a" style="left:1295px;top:331px;width:12px;height:10px;background:#7F7F00"></div><div class="a t" style="left:1333px;top:349.88px;font-size:9px;color:#1a1a1a;">Values</div><div class="a t" style="left:1333px;top:367.88px;font-size:9px;color:#1a1a1a;">References</div><div class="a t" style="left:1333px;top:385.88px;font-size:9px;color:#1a1a1a;">Footprint Text</div><div class="a t" style="left:1333px;top:403.88px;font-size:9px;color:#1a1a1a;">Hidden Text</div><div class="a" style="left:1295px;top:403px;width:12px;height:10px;background:#848484"></div><div class="a t" style="left:1333px;top:429.88px;font-size:9px;color:#1a1a1a;">Ratsnest</div><div class="a" style="left:1295px;top:429px;width:12px;height:10px;background:#FFFFFF"></div><div class="a t" style="left:1333px;top:447.88px;font-size:9px;color:#1a1a1a;">DRC Warnings</div><div class="a" style="left:1295px;top:447px;width:12px;height:10px;background:#00C800"></div><div class="a t" style="left:1333px;top:465.88px;font-size:9px;color:#1a1a1a;">DRC Errors</div><div class="a" style="left:1295px;top:465px;width:12px;height:10px;background:#D80000"></div><div class="a t" style="left:1333px;top:483.88px;font-size:9px;color:#1a1a1a;">DRC Exclusions</div><div class="a" style="left:1295px;top:483px;width:12px;height:10px;background:#FFFFFF"></div><div class="a t" style="left:1333px;top:501.88px;font-size:9px;color:#1a1a1a;">Anchors</div><div class="a" style="left:1295px;top:501px;width:12px;height:10px;background:#000084"></div><div class="a t" style="left:1333px;top:519.88px;font-size:9px;color:#1a1a1a;">Locked Item Shadow</div><div class="a" style="left:1295px;top:519px;width:12px;height:10px;background:#0C0C4A"></div><div class="a t" style="left:1333px;top:537.88px;font-size:9px;color:#1a1a1a;">Conflict Footprint Shadow</div><div class="a" style="left:1295px;top:537px;width:12px;height:10px;background:#4A0008"></div><div class="a t" style="left:1333px;top:555.88px;font-size:9px;color:#1a1a1a;">Drawing Sheet</div><div class="a" style="left:1295px;top:555px;width:12px;height:10px;background:#480004"></div><div class="a t" style="left:1333px;top:573.88px;font-size:9px;color:#1a1a1a;">Grid</div><div class="a" style="left:1295px;top:573px;width:12px;height:10px;background:#C0C0C0"></div><div class="a t" style="left:1293px;top:639.38px;font-size:9px;color:#1a1a1a;">Presets (Ctrl+Tab):</div><div class="a" style="left:1293px;top:652px;width:166px;height:21px;background:#fff;border:1px solid #A5A5A5"></div><div class="a t" style="left:1297px;top:657.69px;font-size:11px;color:#1a1a1a;">All Layers</div><div class="a" style="left:1440px;top:654px;width:17px;height:17px;background:#fff;border:1px solid #ADADAD;border-radius:2px"></div><svg class="a" style="left:1443.5px;top:658.5px" width="10" height="8"><path d="M2 2.5 L5 5.5 L8 2.5" fill="none" stroke="#333" stroke-width="1"/></svg><div class="a t" style="left:1293px;top:678.38px;font-size:9px;color:#1a1a1a;">Viewports (Shift+Tab):</div><div class="a" style="left:1293px;top:691px;width:166px;height:21px;background:#fff;border:1px solid #A5A5A5"></div><div class="a t" style="left:1297px;top:696.69px;font-size:11px;color:#1a1a1a;">---</div><div class="a" style="left:1440px;top:693px;width:17px;height:17px;background:#fff;border:1px solid #ADADAD;border-radius:2px"></div><svg class="a" style="left:1443.5px;top:697.5px" width="10" height="8"><path d="M2 2.5 L5 5.5 L8 2.5" fill="none" stroke="#333" stroke-width="1"/></svg><div class="a" style="left:1286px;top:722px;width:180px;height:19px;background:#C2C2C2"></div><div class="a t" style="left:1289px;top:725.27px;font-size:11.5px;color:#1a1a1a;">Selection Filter</div><div class="a" style="left:1291px;top:746px;width:12px;height:12px;background:#fff;border:1px solid #A8A8A8;border-radius:2px"></div><div class="a" style="left:1365px;top:746px;width:12px;height:12px;background:#fff;border:1px solid #A8A8A8;border-radius:2px"></div><div class="a t" style="left:1307px;top:748.58px;font-size:9px;color:#1a1a1a;">All items</div><div class="a t" style="left:1381px;top:748.58px;font-size:9px;color:#1a1a1a;">Locked items</div><div class="a" style="left:1291px;top:759px;width:12px;height:12px;background:#fff;border:1px solid #A8A8A8;border-radius:2px"></div><div class="a" style="left:1365px;top:759px;width:12px;height:12px;background:#fff;border:1px solid #A8A8A8;border-radius:2px"></div><div class="a t" style="left:1307px;top:761.58px;font-size:9px;color:#1a1a1a;">Footprints</div><div class="a t" style="left:1381px;top:761.58px;font-size:9px;color:#1a1a1a;">Text</div><div class="a" style="left:1291px;top:772px;width:12px;height:12px;background:#fff;border:1px solid #A8A8A8;border-radius:2px"></div><div class="a" style="left:1365px;top:772px;width:12px;height:12px;background:#fff;border:1px solid #A8A8A8;border-radius:2px"></div><div class="a t" style="left:1307px;top:774.58px;font-size:9px;color:#1a1a1a;">Tracks</div><div class="a t" style="left:1381px;top:774.58px;font-size:9px;color:#1a1a1a;">Vias</div><div class="a" style="left:1291px;top:785px;width:12px;height:12px;background:#fff;border:1px solid #A8A8A8;border-radius:2px"></div><div class="a" style="left:1365px;top:785px;width:12px;height:12px;background:#fff;border:1px solid #A8A8A8;border-radius:2px"></div><div class="a t" style="left:1307px;top:787.58px;font-size:9px;color:#1a1a1a;">Pads</div><div class="a t" style="left:1381px;top:787.58px;font-size:9px;color:#1a1a1a;">Graphics</div><div class="a" style="left:1291px;top:798px;width:12px;height:12px;background:#fff;border:1px solid #A8A8A8;border-radius:2px"></div><div class="a" style="left:1365px;top:798px;width:12px;height:12px;background:#fff;border:1px solid #A8A8A8;border-radius:2px"></div><div class="a t" style="left:1307px;top:800.58px;font-size:9px;color:#1a1a1a;">Zones</div><div class="a t" style="left:1381px;top:800.58px;font-size:9px;color:#1a1a1a;">Rule Areas</div><div class="a" style="left:1291px;top:811px;width:12px;height:12px;background:#fff;border:1px solid #A8A8A8;border-radius:2px"></div><div class="a" style="left:1365px;top:811px;width:12px;height:12px;background:#fff;border:1px solid #A8A8A8;border-radius:2px"></div><div class="a t" style="left:1307px;top:813.58px;font-size:9px;color:#1a1a1a;">Dimensions</div><div class="a t" style="left:1381px;top:813.58px;font-size:9px;color:#1a1a1a;">Other items</div>
<div class="a" style="left:6px;top:828px;width:1460px;height:27px;background:#F3F3F3"></div><div class="a t" style="left:16.3px;top:831.24px;font-size:10.7px;color:#1a1a1a;">Pads</div><div class="a t" style="left:16.3px;top:844.14px;font-size:10.7px;color:#1a1a1a;">0</div><div class="a t" style="left:67.2px;top:831.24px;font-size:10.7px;color:#1a1a1a;">Vias</div><div class="a t" style="left:67.2px;top:844.14px;font-size:10.7px;color:#1a1a1a;">18</div><div class="a t" style="left:116.3px;top:831.24px;font-size:10.7px;color:#1a1a1a;">Track Segments</div><div class="a t" style="left:116.3px;top:844.14px;font-size:10.7px;color:#1a1a1a;">0</div><div class="a t" style="left:221.3px;top:831.24px;font-size:10.7px;color:#1a1a1a;">Nets</div><div class="a t" style="left:221.3px;top:844.14px;font-size:10.7px;color:#1a1a1a;">0</div><div class="a t" style="left:271.3px;top:831.24px;font-size:10.7px;color:#1a1a1a;">Unrouted</div><div class="a t" style="left:271.3px;top:844.14px;font-size:10.7px;color:#1a1a1a;">0</div><div class="a" style="left:6px;top:855px;width:1460px;height:21px;background:#F3F3F3;border-top:1px solid #A0A0A0"></div><div class="a t" style="left:9.4px;top:861.69px;font-size:11px;color:#1a1a1a;">File 'C:\users\steamuser\Desktop\aa\aa.kicad_pcb' saved.</div><div class="a" style="left:465px;top:857px;width:1px;height:18px;background:#C8C8C8"></div><div class="a" style="left:536px;top:857px;width:1px;height:18px;background:#C8C8C8"></div><div class="a" style="left:688px;top:857px;width:1px;height:18px;background:#C8C8C8"></div><div class="a" style="left:928px;top:857px;width:1px;height:18px;background:#C8C8C8"></div><div class="a" style="left:1103px;top:857px;width:1px;height:18px;background:#C8C8C8"></div><div class="a" style="left:1160px;top:857px;width:1px;height:18px;background:#C8C8C8"></div><div class="a" style="left:1318px;top:857px;width:1px;height:18px;background:#C8C8C8"></div><div class="a t" style="left:472px;top:861.69px;font-size:11px;color:#1a1a1a;">Z 1.63</div><div class="a t" style="left:543px;top:861.69px;font-size:11px;color:#1a1a1a;">X 90.0000  Y 63.0000</div><div class="a t" style="left:694px;top:861.69px;font-size:11px;color:#1a1a1a;">dx 90.0000  dy 63.0000  dist 109.8590</div><div class="a t" style="left:935px;top:861.69px;font-size:11px;color:#1a1a1a;">grid 1.0000</div><div class="a t" style="left:1109px;top:861.69px;font-size:11px;color:#1a1a1a;">mm</div><div class="a t" style="left:1167px;top:861.69px;font-size:11px;color:#1a1a1a;">Select item(s)</div>
<svg class="a" style="left:0;top:0" width="1472" height="882">
<rect x="45" y="48" width="1" height="26" fill="#BDBDBD"/><rect x="85" y="48" width="1" height="26" fill="#BDBDBD"/><rect x="189" y="48" width="1" height="26" fill="#BDBDBD"/><rect x="262" y="48" width="1" height="26" fill="#BDBDBD"/><rect x="302" y="48" width="1" height="26" fill="#BDBDBD"/><rect x="501" y="48" width="1" height="26" fill="#BDBDBD"/><rect x="765" y="48" width="1" height="26" fill="#BDBDBD"/><rect x="869" y="48" width="1" height="26" fill="#BDBDBD"/><rect x="941" y="48" width="1" height="26" fill="#BDBDBD"/><rect x="981" y="48" width="1" height="26" fill="#BDBDBD"/><g transform="translate(15,50)"><path d="M0 0 H17 L22 5 V22 H0 Z" fill="#545454"/><rect x="4" y="8" width="13.5" height="12" fill="#fff"/><rect x="4.5" y="1.5" width="9.5" height="5" fill="#fff"/><rect x="10" y="2" width="2.2" height="4" fill="#545454"/></g><g transform="translate(55,50)"><rect x="0" y="0" width="22" height="22" rx="3" fill="#11801F"/><path d="M5 0 C6 6 9 9 16 10 M10 0 C11 3 14 5 19 6" stroke="#3DB04A" stroke-width="1.4" fill="none"/><path d="M0 14 C4 14 7 17 9 22" stroke="#2FA03C" stroke-width="1.2" fill="none"/><circle cx="4" cy="13.5" r="1.7" fill="#F4E890"/><circle cx="19.5" cy="7.5" r="1.6" fill="#F0D890"/><path d="M20.41 16.30 L21.79 17.38 L20.46 19.68 L18.84 19.03 L17.28 19.93 L17.03 21.66 L14.37 21.66 L14.12 19.93 L12.56 19.03 L10.94 19.68 L9.61 17.38 L10.99 16.30 L10.99 14.50 L9.61 13.42 L10.94 11.12 L12.56 11.77 L14.12 10.87 L14.37 9.14 L17.03 9.14 L17.28 10.87 L18.84 11.77 L20.46 11.12 L21.79 13.42 L20.41 14.50 Z" fill="#C8203C" stroke="#fff" stroke-width="0.7"/><circle cx="15.7" cy="15.4" r="2.4" fill="#fff"/><circle cx="15.7" cy="15.4" r="1.3" fill="#1E8A2E"/></g><g transform="translate(95,50)"><path d="M3.5 0.5 H14 L18.5 5 V17.5 H3.5 Z" fill="none" stroke="#545454" stroke-width="1.3"/><path d="M14 0.5 V5 H18.5" fill="#545454"/><path d="M0.6 0 V17.5 M-0.5 0.5 H1.7 M-0.5 17 H1.7 M3.5 21.5 H18.5 M3.5 20 V23 M18.5 20 V23" stroke="#545454" stroke-width="1.2" fill="none"/></g><g transform="translate(126,50)"><rect x="5" y="0.8" width="14" height="6" fill="none" stroke="#545454" stroke-width="1.6"/><path d="M0 6 H24 V17 H19 V13 H5 V17 H0 Z" fill="#545454" rx="2"/><path d="M5.8 13.8 H16 L18.2 16 V21.2 H5.8 Z" fill="none" stroke="#545454" stroke-width="1.6"/></g><g transform="translate(158,50)"><rect x="6" y="0.8" width="12" height="4" fill="none" stroke="#545454" stroke-width="1.5"/><rect x="0" y="4" width="24" height="6" fill="#545454"/><path d="M6.5 10 V17.5 H16 L18 15.5 V10" fill="none" stroke="#545454" stroke-width="1.5"/><path d="M2 10 V21.5 M22 10 V21.5 M0 21.5 H4 M20 21.5 H24" stroke="#545454" stroke-width="1.5"/></g><g transform="translate(200,50)"><path d="M2.5 8.5 A8 8 0 1 1 5 17.5" fill="none" stroke="#545454" stroke-width="2"/><path d="M1 1.5 V9.5 H8.5" fill="none" stroke="#545454" stroke-width="2"/></g><g transform="translate(233,50)"><path d="M16.5 8.5 A8 8 0 1 0 14 17.5" fill="none" stroke="#C4C4C4" stroke-width="2"/><path d="M18 1.5 V9.5 H10.5" fill="none" stroke="#C4C4C4" stroke-width="2"/></g><g transform="translate(271,50)"><circle cx="12.5" cy="8.5" r="7.8" fill="none" stroke="#545454" stroke-width="1.8"/><path d="M7 14 L1 20.5" stroke="#545454" stroke-width="2.4" stroke-linecap="round"/><text x="12.5" y="13" font-family="Liberation Sans" font-weight="bold" font-size="12" text-anchor="middle" fill="#545454">A</text></g><g transform="translate(311,50)"><path d="M2.5 10 A9 8.5 0 0 1 19 5.5" fill="none" stroke="#545454" stroke-width="2"/><path d="M19.5 12 A9 8.5 0 0 1 3 16.5" fill="none" stroke="#545454" stroke-width="2"/><path d="M21.5 1.5 L20.5 8 L14.5 6.5" fill="none" stroke="#545454" stroke-width="2"/><path d="M0.5 20.5 L1.5 14 L7.5 15.5" fill="none" stroke="#545454" stroke-width="2"/></g><g transform="translate(343,50)"><circle cx="9.5" cy="9" r="7.6" fill="none" stroke="#545454" stroke-width="2"/><path d="M15 14.5 L21 20.5" stroke="#545454" stroke-width="2.4" stroke-linecap="round"/><path d="M5.5 9 H13.5 M9.5 5 V13" stroke="#545454" stroke-width="2"/></g><g transform="translate(375,50)"><circle cx="9.5" cy="9" r="7.6" fill="none" stroke="#545454" stroke-width="2"/><path d="M15 14.5 L21 20.5" stroke="#545454" stroke-width="2.4" stroke-linecap="round"/><path d="M5.5 9 H13.5" stroke="#545454" stroke-width="2"/></g><g transform="translate(407,50)"><circle cx="9.5" cy="9" r="7.6" fill="none" stroke="#545454" stroke-width="2"/><path d="M15 14.5 L21 20.5" stroke="#545454" stroke-width="2.4" stroke-linecap="round"/><path d="M6.5 5 H10.5 L12.5 7 V13 H6.5 Z" fill="#8C8C8C"/></g><g transform="translate(439,50)"><circle cx="9.5" cy="9" r="7.6" fill="none" stroke="#545454" stroke-width="2"/><path d="M15 14.5 L21 20.5" stroke="#545454" stroke-width="2.4" stroke-linecap="round"/><path d="M4.5 12.5 L7.5 8.5 L9.5 10.5 L11.5 9 L14 12.5 Z" fill="#8C8C8C"/><circle cx="12" cy="6" r="1.4" fill="#8C8C8C"/></g><g transform="translate(471,50)"><circle cx="9.5" cy="9" r="7.6" fill="none" stroke="#545454" stroke-width="2"/><path d="M15 14.5 L21 20.5" stroke="#545454" stroke-width="2.4" stroke-linecap="round"/><path d="M6.5 4 L13 10 L10.2 10.3 L11.8 13.5 L10.4 14.2 L8.8 11 L6.5 13 Z" fill="#8C8C8C"/></g><g transform="translate(512,50)"><path d="M0 11.5 L20 20 H0 Z" fill="#808080"/><path d="M13.5 12.5 C13.5 8 11 5.5 6.5 6" fill="none" stroke="#1F80C8" stroke-width="2.1"/><path d="M8.8 2.3 L5.2 6 L8.8 9.7" fill="none" stroke="#1F80C8" stroke-width="2.1"/></g><g transform="translate(544,50)"><path d="M20 11.5 L0 20 H20 Z" fill="#808080"/><path d="M6.5 12.5 C6.5 8 9 5.5 13.5 6" fill="none" stroke="#1F80C8" stroke-width="2.1"/><path d="M11.2 2.3 L14.8 6 L11.2 9.7" fill="none" stroke="#1F80C8" stroke-width="2.1"/></g><g transform="translate(575,50)"><path d="M0 1 L22 9.5 H0 Z" fill="#808080"/><path d="M0 12.5 H22 L0 21 Z" fill="#1F80C8"/></g><g transform="translate(608,50)"><path d="M9 0.5 V21.5 H0 Z" fill="#808080"/><path d="M11 0.5 V21.5 H20 Z" fill="#1F80C8"/></g><g transform="translate(638,50)"><rect x="1" y="1" width="21" height="21" fill="none" stroke="#9A9A9A" stroke-width="1" stroke-dasharray="2.5 1.5"/><rect x="3.5" y="3" width="11.5" height="10.5" fill="none" stroke="#9A9A9A" stroke-width="1.3"/><rect x="8.5" y="8" width="11" height="11" fill="#F3F3F3" stroke="#9A9A9A" stroke-width="1.3"/><circle cx="1" cy="1" r="1.4" fill="#9A9A9A"/><circle cx="22" cy="1" r="1.4" fill="#9A9A9A"/><circle cx="1" cy="22" r="1.4" fill="#9A9A9A"/><circle cx="22" cy="22" r="1.4" fill="#9A9A9A"/></g><g transform="translate(672,50)"><rect x="1" y="2" width="12" height="11" fill="none" stroke="#9A9A9A" stroke-width="1.2"/><rect x="7" y="8" width="12" height="12" fill="#F3F3F3" stroke="#9A9A9A" stroke-width="1.2"/><circle cx="1" cy="2" r="1.4" fill="#9A9A9A"/><circle cx="13" cy="2" r="1.4" fill="#9A9A9A"/><circle cx="1" cy="13" r="1.4" fill="#9A9A9A"/><circle cx="7" cy="8" r="1.4" fill="#9A9A9A"/><circle cx="19" cy="8" r="1.4" fill="#9A9A9A"/><circle cx="7" cy="20" r="1.4" fill="#9A9A9A"/><circle cx="19" cy="20" r="1.4" fill="#9A9A9A"/></g><g transform="translate(705,50)"><path d="M4 10 V6.5 A5 5 0 0 1 14 6.5 V10" fill="none" stroke="#A8A8A8" stroke-width="2.4"/><rect x="0" y="10" width="18" height="12" rx="1.5" fill="#A8A8A8"/><circle cx="9" cy="15" r="1.8" fill="#fff"/><path d="M8.3 15 H9.7 L10 19 H8 Z" fill="#fff"/></g><g transform="translate(734,50)"><path d="M14 9 V6 A5 5 0 0 1 24 6 V8" fill="none" stroke="#A8A8A8" stroke-width="2.4"/><rect x="0" y="10" width="17" height="12" rx="1.5" fill="#A8A8A8"/><circle cx="8.5" cy="15" r="1.8" fill="#fff"/><path d="M7.8 15 H9.2 L9.5 19 H7.5 Z" fill="#fff"/></g><g transform="translate(774,49)"><path d="M1.5 3.5 H24 V20.5 H1.5 V14.5 A2.4 2.4 0 0 0 1.5 9.5 Z" fill="none" stroke="#333" stroke-width="1"/><rect x="2.8" y="0" width="4.8" height="6" fill="#1F80C8"/><rect x="10" y="0" width="4.8" height="6" fill="#1F80C8"/><rect x="17.2" y="0" width="4.8" height="6" fill="#1F80C8"/><rect x="2.8" y="17" width="4.8" height="6.5" fill="#1F80C8"/><rect x="10" y="17" width="4.8" height="6.5" fill="#1F80C8"/><circle cx="16.5" cy="16.5" r="7" fill="#C8203C"/><path d="M12 21 L12.6 18.6 L18.4 12.8 L20.2 14.6 L14.4 20.4 Z" fill="#fff"/></g><g transform="translate(806,50)"><rect x="0" y="1" width="5" height="21" fill="#545454"/><rect x="6.5" y="1" width="5" height="21" fill="#545454"/><path d="M13 3 L17 1.5 L21 16 L17 17.5 Z" fill="#4BA3D6"/><path d="M1 5 H4 M1 8 H4 M7.5 5 H10.5 M7.5 8 H10.5 M1 19 H4 M7.5 19 H10.5" stroke="#aaa" stroke-width="0.8"/><circle cx="15" cy="14" r="5" fill="none" stroke="#C8203C" stroke-width="2.4"/><circle cx="15" cy="14" r="3.6" fill="#fff"/><path d="M18.5 17.5 L23 22.5" stroke="#C8203C" stroke-width="2.6"/></g><g transform="translate(839,50)"><rect x="3" y="-0.5" width="16" height="16.5" rx="1.5" fill="#3A3A3A"/><rect x="3" y="13" width="16" height="1.2" fill="#666"/><rect x="0" y="17" width="22" height="3" fill="#1F80C8"/><path d="M6 16 V22 M11 16 V22 M16 16 V22" stroke="#1F80C8" stroke-width="1" opacity="0.6"/></g><g transform="translate(878,50)"><rect x="0" y="0" width="24" height="24" rx="3" fill="#D8CFC0"/><path d="M19.5 0 H21 Q24 0 24 3 V21 Q24 24 21 24 H11 Z" fill="#1E9A2E"/><path d="M17.2 0 L9 22 M19 0 L10.8 22" stroke="#fff" stroke-width="0.9"/><path d="M18.2 0 L10 22" stroke="#333" stroke-width="0.7"/><circle cx="20.5" cy="8.5" r="1.6" fill="#F0E060"/><path d="M5.5 0.5 H10.5 M8 0.5 V6.5 M8 6.5 H12 M8 6.5 L4.5 11.5" stroke="#333" stroke-width="1.5" fill="none"/><circle cx="8" cy="6.5" r="1.9" fill="#333"/><path d="M3.5 13 A5 5 0 0 0 4 21.5" fill="none" stroke="#C8203C" stroke-width="3"/><path d="M3 23.5 L9.5 21 L6.5 17 Z" fill="#C8203C" stroke="#C8203C" stroke-width="1" stroke-linejoin="round"/></g><g transform="translate(912,50)"><rect x="0.5" y="1.5" width="4.5" height="4.5" fill="none" stroke="#545454" stroke-width="1.1"/><rect x="0.5" y="8.5" width="4.5" height="4.5" fill="none" stroke="#545454" stroke-width="1.1"/><rect x="0.5" y="15.5" width="4.5" height="4.5" fill="none" stroke="#545454" stroke-width="1.1"/><path d="M8 3.5 H17.5 M8 10.5 H11" stroke="#545454" stroke-width="1.2"/><circle cx="15.5" cy="15.5" r="6.5" fill="#C8203C"/><path d="M12.3 15.5 L14.8 18 L19 13" fill="none" stroke="#fff" stroke-width="1.9"/></g><g transform="translate(950,49)"><rect x="0" y="0" width="24" height="24" rx="3" fill="#D8CFC0"/><rect x="9.5" y="0" width="4.2" height="5" fill="#C8203C"/><rect x="18" y="6.5" width="5.5" height="4.5" fill="#C8203C"/><rect x="10" y="20" width="3" height="4" fill="#C8203C"/><path d="M11.5 4.5 V8.8 H18 M0.5 16.5 H7.5 M7.5 12 V21 M7.5 14 L11.5 8.8 M7.5 18.5 L11.5 23.5" stroke="#222" stroke-width="1.6" fill="none"/></g><g transform="translate(991,50)"><rect x="0" y="0.5" width="22.5" height="21.5" rx="2" fill="#545454"/><rect x="0" y="4" width="22.5" height="0.8" fill="#F3F3F3"/><circle cx="3" cy="2.3" r="0.8" fill="#fff"/><circle cx="5.5" cy="2.3" r="0.8" fill="#fff"/><circle cx="8" cy="2.3" r="0.8" fill="#fff"/><path d="M4 9 L8 11.5 L4 14" fill="none" stroke="#fff" stroke-width="1.6"/><path d="M9.5 15.5 H14.5" stroke="#fff" stroke-width="1.5"/></g>
<rect x="195" y="82" width="1" height="26" fill="#BDBDBD"/><rect x="344" y="82" width="1" height="26" fill="#BDBDBD"/><rect x="511" y="82" width="1" height="26" fill="#BDBDBD"/><rect x="678" y="82" width="1" height="26" fill="#BDBDBD"/><rect x="160.5" y="80.5" width="29" height="29" fill="#CBE3F9" stroke="#4F93D8" stroke-width="1"/><g transform="translate(160,80)"><path d="M6 5 V20 A4 4 0 0 0 10 24 H20 A4 4 0 0 0 24 20 V5" fill="none" stroke="#3B4A60" stroke-width="2"/><path d="M11 10 H19 M11 14 H19" stroke="#3B4A60" stroke-width="1.6"/><circle cx="15" cy="24" r="2.6" fill="#1F80C8"/></g><path d="M480 83 H498 L486 107 H480 Z" fill="#7A0000"/><path d="M498 83 H504 V107 H486 Z" fill="#007A00"/><path d="M497 83 L485 107 M499.5 83 L487.5 107" stroke="#fff" stroke-width="1"/>
<rect x="312.5" y="117.5" width="29" height="29" fill="#CBE3F9" stroke="#4F93D8" stroke-width="1"/><circle cx="316.8" cy="122.0" r="1.5" fill="#3F4B5B"/><circle cx="316.8" cy="128.7" r="1.5" fill="#3F4B5B"/><circle cx="316.8" cy="135.4" r="1.5" fill="#3F4B5B"/><circle cx="316.8" cy="142.1" r="1.5" fill="#3F4B5B"/><circle cx="323.6" cy="122.0" r="1.5" fill="#3F4B5B"/><circle cx="323.6" cy="128.7" r="1.5" fill="#3F4B5B"/><circle cx="323.6" cy="135.4" r="1.5" fill="#3F4B5B"/><circle cx="323.6" cy="142.1" r="1.5" fill="#3F4B5B"/><circle cx="330.4" cy="122.0" r="1.5" fill="#3F4B5B"/><circle cx="330.4" cy="128.7" r="1.5" fill="#3F4B5B"/><circle cx="330.4" cy="135.4" r="1.5" fill="#3F4B5B"/><circle cx="330.4" cy="142.1" r="1.5" fill="#3F4B5B"/><circle cx="337.2" cy="122.0" r="1.5" fill="#3F4B5B"/><circle cx="337.2" cy="128.7" r="1.5" fill="#3F4B5B"/><circle cx="337.2" cy="135.4" r="1.5" fill="#3F4B5B"/><circle cx="337.2" cy="142.1" r="1.5" fill="#3F4B5B"/><g transform="translate(315,151)"><circle cx="1.5" cy="2" r="1.3" fill="#444"/><circle cx="1.5" cy="8.5" r="1.3" fill="#444"/><circle cx="1.5" cy="15" r="1.3" fill="#444"/><circle cx="1.5" cy="21.5" r="1.3" fill="#444"/><circle cx="22.5" cy="2" r="1.3" fill="#444"/><circle cx="22.5" cy="8.5" r="1.3" fill="#444"/><circle cx="22.5" cy="15" r="1.3" fill="#444"/><circle cx="22.5" cy="21.5" r="1.3" fill="#444"/><path d="M7 10 V7.5 A5 5 0 0 1 17 7.5 V10" fill="none" stroke="#C8203C" stroke-width="2.6"/><rect x="4" y="10" width="16" height="14" rx="1" fill="#C8203C"/><circle cx="12" cy="15.5" r="1.8" fill="#fff"/><path d="M11.3 15.5 H12.7 L13 20 H11 Z" fill="#fff"/></g><g transform="translate(315,184)"><path d="M3 23 V2 M1 4.5 L3 1.5 L5 4.5" stroke="#333" stroke-width="1.2" fill="none"/><path d="M3 22.5 H24 M21.5 20.5 L24.5 22.5 L21.5 24.5" stroke="#333" stroke-width="1.2" fill="none"/><path d="M3 22.5 L20 4" stroke="#333" stroke-width="1"/><circle cx="20.5" cy="3.5" r="1.8" fill="#C8203C"/><text x="6.5" y="12.5" font-family="Liberation Sans" font-size="10" fill="#444">r</text><text x="12.5" y="20.5" font-family="Liberation Serif" font-style="italic" font-size="11" fill="#444">θ</text></g><text x="327" y="229" font-family="Liberation Sans" font-size="10.5" font-weight="bold" text-anchor="middle" fill="#555">in</text><path d="M318 233.2 H336" stroke="#444" stroke-width="1.6"/><path d="M320.5 230.7 L317 233.2 L320.5 235.7 M333.5 230.7 L337 233.2 L333.5 235.7" fill="#444" stroke="#444" stroke-width="1"/><text x="327" y="261" font-family="Liberation Sans" font-size="10.5" font-weight="bold" text-anchor="middle" fill="#555">mil</text><path d="M318 265.6 H336" stroke="#444" stroke-width="1.6"/><path d="M320.5 263.1 L317 265.6 L320.5 268.1 M333.5 263.1 L337 265.6 L333.5 268.1" fill="#444" stroke="#444" stroke-width="1"/><rect x="312.5" y="277.5" width="29" height="29" fill="#CBE3F9" stroke="#4F93D8" stroke-width="1"/><text x="327" y="293.5" font-family="Liberation Sans" font-size="10.5" font-weight="bold" text-anchor="middle" fill="#555">mm</text><path d="M318 297.5 H336" stroke="#444" stroke-width="1.6"/><path d="M320.5 295.0 L317 297.5 L320.5 300.0 M333.5 295.0 L337 297.5 L333.5 300.0" fill="#444" stroke="#444" stroke-width="1"/><path d="M314.5 324.3 H340 M327 312 V338" stroke="#777" stroke-width="0.8"/><path d="M322 324.3 H332 M327 319.5 V329" stroke="#1F80C8" stroke-width="2.4"/><path d="M326.5 326 L333.5 331 L330.5 331.5 L332 335 L330.4 335.6 L329 332 L326.8 334 Z" fill="#555"/><rect x="314" y="343" width="26" height="1" fill="#BDBDBD"/><path d="M319 352 V374.5 M316 372 H338 M319 372 L334 357.5" stroke="#444" stroke-width="1.8" fill="none"/><path d="M319 365.5 H326.5 V372" stroke="#444" stroke-width="1.2" fill="none"/><rect x="314" y="383" width="26" height="1" fill="#BDBDBD"/><rect x="312.5" y="389.5" width="29" height="29" fill="#CBE3F9" stroke="#4F93D8" stroke-width="1"/><path d="M319.5 398 L337 413 M334 398 L320 413 M319.5 398 L333.5 399" stroke="#555" stroke-width="1.2"/><circle cx="319.5" cy="398" r="2.3" fill="#fff" stroke="#555" stroke-width="1.1"/><circle cx="333" cy="399.5" r="2.3" fill="#fff" stroke="#555" stroke-width="1.1"/><circle cx="320.5" cy="410" r="2.3" fill="#fff" stroke="#555" stroke-width="1.1"/><circle cx="333.5" cy="410" r="2.3" fill="#fff" stroke="#555" stroke-width="1.1"/><path d="M315.5 447.5 L339 424.5 M318 436.5 L328 426 M324.5 445 C329 444 334 441 336 433" stroke="#555" stroke-width="1.1" fill="none"/><circle cx="318" cy="436.5" r="2" fill="#fff" stroke="#555"/><circle cx="328" cy="426.5" r="2" fill="#fff" stroke="#555"/><circle cx="324.8" cy="445" r="2" fill="#fff" stroke="#555"/><circle cx="336" cy="434" r="2" fill="#fff" stroke="#555"/><rect x="314" y="455" width="26" height="1" fill="#BDBDBD"/><path d="M315.5 466 L323 474 H332 L339 481" stroke="#C8203C" stroke-width="1.8" fill="none"/><path d="M320.5 464 L328 470 H333 L339 476" stroke="#C8203C" stroke-width="1.8" fill="none"/><path d="M315.5 474 L323 481 H333 L336 487" stroke="#444" stroke-width="1.8" fill="none"/><path d="M315.5 478 L320 482" stroke="#444" stroke-width="1.8"/><circle cx="325" cy="476" r="2.6" fill="#fff" stroke="#F0A020" stroke-width="1.8"/><g opacity="0.45"><path d="M315 500 H325 Q328 500 329 504 V520 M329 497 L334 502 V520 M323.5 507 H339" stroke="#888" stroke-width="1.8" fill="none"/><path d="M321 508 V520" stroke="#D05070" stroke-width="2.2"/><circle cx="321" cy="507" r="2.6" fill="#FFE060"/><path d="M324 507 H339" stroke="#40A0D0" stroke-width="1.6"/></g><rect x="314" y="527" width="26" height="1" fill="#BDBDBD"/><rect x="312.5" y="533.5" width="29" height="29" fill="#CBE3F9" stroke="#4F93D8" stroke-width="1"/><path d="M317 542 H323 V536.5 H337 V557 H317 Z" fill="#3A9DE0" stroke="#1A5A90" stroke-width="0.6"/><circle cx="331.5" cy="547" r="3.6" fill="#fff"/><circle cx="332" cy="547" r="1.6" fill="#444"/><path d="M332 547 H336" stroke="#444" stroke-width="1.3"/><path d="M323 575 V570.5 H337 V589.5 H317 V579.5 H323" fill="none" stroke="#444" stroke-width="1.2" stroke-dasharray="2 1.6"/><circle cx="332" cy="579" r="1.6" fill="#444"/><path d="M332 579 H336" stroke="#444" stroke-width="1.3"/><rect x="314" y="599" width="26" height="1" fill="#BDBDBD"/><path d="M316 611 H338 V629 H316 V622 A2 2 0 0 0 316 618 Z" fill="none" stroke="#333" stroke-width="1"/><rect x="318" y="608" width="4" height="4.5" fill="#1F80C8"/><rect x="324.5" y="608" width="4" height="4.5" fill="#1F80C8"/><rect x="331" y="608" width="4" height="4.5" fill="#1F80C8"/><rect x="318" y="626" width="4" height="4.5" fill="#fff" stroke="#1F80C8" stroke-width="1"/><rect x="324.5" y="626" width="4" height="4.5" fill="#fff" stroke="#1F80C8" stroke-width="1"/><rect x="331" y="626" width="4" height="4.5" fill="#fff" stroke="#1F80C8" stroke-width="1"/><path d="M315 632 L338 608" stroke="#333" stroke-width="1"/><circle cx="327" cy="652" r="9.5" fill="none" stroke="#DDDDDD" stroke-width="2.5"/><path d="M327 642.5 A9.5 9.5 0 0 0 318 655" fill="none" stroke="#F29100" stroke-width="5"/><circle cx="327" cy="652" r="3.5" fill="#F3F3F3" stroke="#ccc"/><path d="M315.5 664 L339 640" stroke="#444" stroke-width="1.1"/><path d="M315.5 683.5 H339" stroke="#1F80C8" stroke-width="2.6"/><path d="M315.5 688.5 H339" stroke="#1F80C8" stroke-width="1.2"/><path d="M326 672 V696" stroke="#C8203C" stroke-width="2.6"/><path d="M330 680 V696" stroke="#C8203C" stroke-width="1"/><path d="M316 696.5 L339 673" stroke="#333" stroke-width="1.1"/><rect x="314" y="703" width="26" height="1" fill="#BDBDBD"/><rect x="312.5" y="709.5" width="29" height="28" fill="#CBE3F9" stroke="#4F93D8" stroke-width="1"/><path d="M317 725 L327 733 L337 725 L337 727.5 L327 735.5 L317 727.5 Z" fill="#F0A020"/><path d="M317 721.5 L327 729.5 L337 721.5 L337 725 L327 733 L317 725 Z" fill="#F0A020"/><path d="M317 721 L327 729 L337 721 L337 723 L327 731 L317 723 Z" fill="#303A48"/><path d="M327 713 L337 721 L327 729 L317 721 Z" fill="#1D7EC6"/><rect x="312.5" y="741.5" width="29" height="29" fill="#CBE3F9" stroke="#4F93D8" stroke-width="1"/><g transform="translate(327,756) rotate(-45)"><path d="M-1.6 -6 V9.5 A1.6 1.6 0 0 0 1.6 9.5 V-6 Z" fill="#1F80C8"/><path d="M-4.6 -11.5 A5 5 0 0 0 4.6 -11.5 L4.6 -14.5 L2 -14.5 L2 -11 L-2 -11 L-2 -14.5 L-4.6 -14.5 Z" fill="#1F80C8"/><path d="M-4.6 -11.5 A5 5 0 0 0 -1.6 -6.5 H1.6 A5 5 0 0 0 4.6 -11.5" fill="#1F80C8"/></g><g transform="translate(327,756) rotate(45)"><rect x="-2.2" y="-14" width="4.4" height="9" rx="2" fill="#444"/><path d="M-0.7 -5 V11 L0 12.5 L0.7 11 V-5 Z" fill="#444"/></g>
<rect x="1250.5" y="117.5" width="29" height="29" fill="#CBE3F9" stroke="#4F93D8" stroke-width="1"/><path d="M1260 124 L1260 137.5 L1263.3 134.5 L1265.6 139.5 L1267.8 138.5 L1265.6 133.6 L1270 133.4 Z" fill="#555" stroke="#555" stroke-width="0.6" stroke-linejoin="round"/><path d="M1254.5 152.5 L1277 175.5 M1277 153.5 L1254.5 175.5" stroke="#555" stroke-width="1.2"/><circle cx="1265.5" cy="164" r="2.3" fill="#fff" stroke="#555" stroke-width="1.2"/><rect x="1252" y="183" width="26" height="1" fill="#BDBDBD"/><path d="M1253.5 195 H1276 V212 H1253.5 V206 A2 2 0 0 0 1253.5 201 Z" fill="none" stroke="#333" stroke-width="1"/><rect x="1256" y="192" width="4.6" height="4.8" fill="#1F80C8"/><rect x="1256" y="210.5" width="4.6" height="4.8" fill="#1F80C8"/><rect x="1262.5" y="192" width="4.6" height="4.8" fill="#1F80C8"/><rect x="1262.5" y="210.5" width="4.6" height="4.8" fill="#1F80C8"/><rect x="1269" y="192" width="4.6" height="4.8" fill="#1F80C8"/><rect x="1269" y="210.5" width="4.6" height="4.8" fill="#1F80C8"/><path d="M1255 246 L1259.5 235.5 H1270 L1275 225" stroke="#1F80C8" stroke-width="2" fill="none" stroke-linecap="round"/><path d="M1280 244 V251 H1273 Z" fill="#111"/><path d="M1253.5 268 C1255.5 266 1256 272 1257 273 C1259 275 1260 262 1262 261 C1264 260 1264 273 1266 273 C1268 273 1267.5 261 1269.5 261 C1271.5 261 1271 270 1273 270.5 C1275 271 1275.5 267.5 1277 267.5" stroke="#1F80C8" stroke-width="1.8" fill="none"/><path d="M1280 276 V283 H1273 Z" fill="#111"/><circle cx="1265" cy="300" r="5" fill="none" stroke="#F29100" stroke-width="3.6"/><path d="M1255 330 H1261 V322.5 H1275 V342 H1255 Z" fill="#1F80C8"/><circle cx="1270" cy="331" r="3.4" fill="#F3F3F3"/><circle cx="1270.5" cy="331" r="1.6" fill="#444"/><path d="M1270.5 331 H1274" stroke="#444" stroke-width="1.3"/><defs><pattern id="hatch" width="4" height="4" patternUnits="userSpaceOnUse" patternTransform="rotate(45)"><rect width="2" height="4" fill="#555"/></pattern></defs><path d="M1255.5 364 H1261.5 V354.5 H1274.5 V373.5 H1255.5 Z" fill="url(#hatch)" stroke="#555" stroke-width="1.2"/><rect x="1252" y="383" width="26" height="1" fill="#BDBDBD"/><path d="M1255.5 413 L1274 395" stroke="#555" stroke-width="1.8" stroke-linecap="round"/><path d="M1255.5 445.5 C1255.5 436 1262 428.5 1274 427.5" stroke="#555" stroke-width="1.8" fill="none" stroke-linecap="round"/><rect x="1255.8" y="459.8" width="18" height="16.5" fill="#C2C2C2" stroke="#555" stroke-width="1.6"/><circle cx="1265" cy="500" r="9" fill="#C2C2C2" stroke="#555" stroke-width="1.6"/><path d="M1256 522.5 L1274.5 525.5 L1273 540.5 L1257 541.5 L1263 533 Z" fill="#C2C2C2" stroke="#555" stroke-width="1.6" stroke-linejoin="round"/><rect x="1254" y="553" width="21.5" height="21.5" rx="3" fill="#555"/><path d="M1256.5 572.5 L1262.5 562.5 L1266.5 568 L1269 565 L1273.5 572.5 Z" fill="#fff"/><circle cx="1269" cy="558.8" r="2.3" fill="#fff"/><path d="M1256.5 587.5 H1273.5 M1265 587.5 V605.5" stroke="#555" stroke-width="2.6"/><rect x="1256" y="619.8" width="18" height="16" fill="#C2C2C2" stroke="#555" stroke-width="1.6"/><path d="M1259 624 H1270 M1259 627.5 H1268 M1259 631 H1270" stroke="#555" stroke-width="1"/><path d="M1253.5 662.5 L1257 666 M1267 648 L1270.5 651.5 M1255 664 L1269 650" stroke="#555" stroke-width="1" fill="none"/><circle cx="1259.5" cy="668" r="3.1" fill="#1F80C8"/><circle cx="1273.5" cy="654" r="3.1" fill="#1F80C8"/><path d="M1280 668 V675 H1273 Z" fill="#111"/><path d="M1257 681 V697 L1261 693.5 L1264 698 L1270 690 L1265 689 Z" fill="#555"/><circle cx="1270" cy="695" r="6.6" fill="#C8203C"/><path d="M1267.5 692.5 L1272.5 697.5 M1272.5 692.5 L1267.5 697.5" stroke="#fff" stroke-width="1.8"/><rect x="1252" y="711" width="26" height="1" fill="#BDBDBD"/><circle cx="1255.0" cy="722.0" r="1.3" fill="#555"/><circle cx="1255.0" cy="728.5" r="1.3" fill="#555"/><circle cx="1255.0" cy="735.0" r="1.3" fill="#555"/><circle cx="1255.0" cy="741.5" r="1.3" fill="#555"/><circle cx="1261.5" cy="722.0" r="1.3" fill="#555"/><circle cx="1261.5" cy="728.5" r="1.3" fill="#555"/><circle cx="1261.5" cy="735.0" r="1.3" fill="#555"/><circle cx="1261.5" cy="741.5" r="1.3" fill="#555"/><circle cx="1268.0" cy="722.0" r="1.3" fill="#555"/><circle cx="1268.0" cy="728.5" r="1.3" fill="#555"/><circle cx="1268.0" cy="735.0" r="1.3" fill="#555"/><circle cx="1268.0" cy="741.5" r="1.3" fill="#555"/><circle cx="1274.5" cy="722.0" r="1.3" fill="#555"/><circle cx="1274.5" cy="728.5" r="1.3" fill="#555"/><circle cx="1274.5" cy="735.0" r="1.3" fill="#555"/><circle cx="1274.5" cy="741.5" r="1.3" fill="#555"/><path d="M1254 735 H1275 M1261.5 722 V742" stroke="#1F80C8" stroke-width="1.6"/><path d="M1280 737 V744 H1273 Z" fill="#111"/><g transform="translate(1265,764) rotate(-45)"><rect x="-12" y="-3.6" width="24" height="7.2" rx="1" fill="none" stroke="#555" stroke-width="1.8"/><path d="M-7 -3 V0 M-3 -3 V1 M1 -3 V0 M5 -3 V1" stroke="#555" stroke-width="1.2"/></g>
<circle cx="1320" cy="175" r="7.8" fill="#555"/><path d="M1313.5 175 Q1320 169 1326.5 175 Q1320 181 1313.5 175 Z" fill="#fff"/><circle cx="1320" cy="175" r="1.6" fill="none" stroke="#555" stroke-width="1"/><circle cx="1320" cy="200" r="7.8" fill="#555"/><path d="M1313.5 200 Q1320 194 1326.5 200 Q1320 206 1313.5 200 Z" fill="#fff"/><circle cx="1320" cy="200" r="1.6" fill="none" stroke="#555" stroke-width="1"/><circle cx="1320" cy="225" r="7.8" fill="#555"/><path d="M1313.5 225 Q1320 219 1326.5 225 Q1320 231 1313.5 225 Z" fill="#fff"/><circle cx="1320" cy="225" r="1.6" fill="none" stroke="#555" stroke-width="1"/><circle cx="1320" cy="250" r="7.8" fill="#555"/><path d="M1313.5 250 Q1320 244 1326.5 250 Q1320 256 1313.5 250 Z" fill="#fff"/><circle cx="1320" cy="250" r="1.6" fill="none" stroke="#555" stroke-width="1"/><circle cx="1320" cy="275" r="7.8" fill="#555"/><path d="M1313.5 275 Q1320 269 1326.5 275 Q1320 281 1313.5 275 Z" fill="#fff"/><circle cx="1320" cy="275" r="1.6" fill="none" stroke="#555" stroke-width="1"/><circle cx="1320" cy="300" r="7.8" fill="#555"/><path d="M1313.5 300 Q1320 294 1326.5 300 Q1320 306 1313.5 300 Z" fill="#fff"/><circle cx="1320" cy="300" r="1.6" fill="none" stroke="#555" stroke-width="1"/><circle cx="1320" cy="318" r="7.8" fill="#555"/><path d="M1313.5 318 Q1320 312 1326.5 318 Q1320 324 1313.5 318 Z" fill="#fff"/><circle cx="1320" cy="318" r="1.6" fill="none" stroke="#555" stroke-width="1"/><circle cx="1320" cy="336" r="7.8" fill="#555"/><path d="M1313.5 336 Q1320 330 1326.5 336 Q1320 342 1313.5 336 Z" fill="#fff"/><circle cx="1320" cy="336" r="1.6" fill="none" stroke="#555" stroke-width="1"/><circle cx="1320" cy="354" r="7.8" fill="#555"/><path d="M1313.5 354 Q1320 348 1326.5 354 Q1320 360 1313.5 354 Z" fill="#fff"/><circle cx="1320" cy="354" r="1.6" fill="none" stroke="#555" stroke-width="1"/><circle cx="1320" cy="372" r="7.8" fill="#555"/><path d="M1313.5 372 Q1320 366 1326.5 372 Q1320 378 1313.5 372 Z" fill="#fff"/><circle cx="1320" cy="372" r="1.6" fill="none" stroke="#555" stroke-width="1"/><circle cx="1320" cy="390" r="7.8" fill="#555"/><path d="M1313.5 390 Q1320 384 1326.5 390 Q1320 396 1313.5 390 Z" fill="#fff"/><circle cx="1320" cy="390" r="1.6" fill="none" stroke="#555" stroke-width="1"/><circle cx="1320" cy="408" r="7.8" fill="#C8C8C8"/><path d="M1316 412 L1324 404" stroke="#555" stroke-width="1.6"/><circle cx="1320" cy="434" r="7.8" fill="#555"/><path d="M1313.5 434 Q1320 428 1326.5 434 Q1320 440 1313.5 434 Z" fill="#fff"/><circle cx="1320" cy="434" r="1.6" fill="none" stroke="#555" stroke-width="1"/><circle cx="1320" cy="452" r="7.8" fill="#555"/><path d="M1313.5 452 Q1320 446 1326.5 452 Q1320 458 1313.5 452 Z" fill="#fff"/><circle cx="1320" cy="452" r="1.6" fill="none" stroke="#555" stroke-width="1"/><circle cx="1320" cy="470" r="7.8" fill="#555"/><path d="M1313.5 470 Q1320 464 1326.5 470 Q1320 476 1313.5 470 Z" fill="#fff"/><circle cx="1320" cy="470" r="1.6" fill="none" stroke="#555" stroke-width="1"/><circle cx="1320" cy="488" r="7.8" fill="#C8C8C8"/><path d="M1316 492 L1324 484" stroke="#555" stroke-width="1.6"/><circle cx="1320" cy="506" r="7.8" fill="#555"/><path d="M1313.5 506 Q1320 500 1326.5 506 Q1320 512 1313.5 506 Z" fill="#fff"/><circle cx="1320" cy="506" r="1.6" fill="none" stroke="#555" stroke-width="1"/><circle cx="1320" cy="524" r="7.8" fill="#555"/><path d="M1313.5 524 Q1320 518 1326.5 524 Q1320 530 1313.5 524 Z" fill="#fff"/><circle cx="1320" cy="524" r="1.6" fill="none" stroke="#555" stroke-width="1"/><circle cx="1320" cy="542" r="7.8" fill="#555"/><path d="M1313.5 542 Q1320 536 1326.5 542 Q1320 548 1313.5 542 Z" fill="#fff"/><circle cx="1320" cy="542" r="1.6" fill="none" stroke="#555" stroke-width="1"/><circle cx="1320" cy="560" r="7.8" fill="#555"/><path d="M1313.5 560 Q1320 554 1326.5 560 Q1320 566 1313.5 560 Z" fill="#fff"/><circle cx="1320" cy="560" r="1.6" fill="none" stroke="#555" stroke-width="1"/><circle cx="1320" cy="578" r="7.8" fill="#555"/><path d="M1313.5 578 Q1320 572 1326.5 578 Q1320 584 1313.5 578 Z" fill="#fff"/><circle cx="1320" cy="578" r="1.6" fill="none" stroke="#555" stroke-width="1"/><rect x="1381.5" y="172.5" width="63" height="4" fill="#F7F7F7" stroke="#A8A8A8" stroke-width="1"/><path d="M1434.5 166.5 H1444.5 V180 L1439.5 184.5 L1434.5 180 Z" fill="#FAFAFA" stroke="#A0A0A0" stroke-width="1"/><rect x="1381.5" y="197.5" width="63" height="4" fill="#F7F7F7" stroke="#A8A8A8" stroke-width="1"/><path d="M1434.5 191.5 H1444.5 V205 L1439.5 209.5 L1434.5 205 Z" fill="#FAFAFA" stroke="#A0A0A0" stroke-width="1"/><rect x="1381.5" y="222.5" width="63" height="4" fill="#F7F7F7" stroke="#A8A8A8" stroke-width="1"/><path d="M1434.5 216.5 H1444.5 V230 L1439.5 234.5 L1434.5 230 Z" fill="#FAFAFA" stroke="#A0A0A0" stroke-width="1"/><rect x="1381.5" y="247.5" width="63" height="4" fill="#F7F7F7" stroke="#A8A8A8" stroke-width="1"/><path d="M1412.5 241.5 H1422.5 V255 L1417.5 259.5 L1412.5 255 Z" fill="#FAFAFA" stroke="#A0A0A0" stroke-width="1"/><rect x="1381.5" y="272.5" width="63" height="4" fill="#F7F7F7" stroke="#A8A8A8" stroke-width="1"/><path d="M1412.5 266.5 H1422.5 V280 L1417.5 284.5 L1412.5 280 Z" fill="#FAFAFA" stroke="#A0A0A0" stroke-width="1"/><path d="M1293.5 752 L1296 755 L1301 748.5" fill="none" stroke="#333" stroke-width="1.2"/><path d="M1293.5 765 L1296 768 L1301 761.5" fill="none" stroke="#333" stroke-width="1.2"/><path d="M1367.5 765 L1370 768 L1375 761.5" fill="none" stroke="#333" stroke-width="1.2"/><path d="M1293.5 778 L1296 781 L1301 774.5" fill="none" stroke="#333" stroke-width="1.2"/><path d="M1367.5 778 L1370 781 L1375 774.5" fill="none" stroke="#333" stroke-width="1.2"/><path d="M1293.5 791 L1296 794 L1301 787.5" fill="none" stroke="#333" stroke-width="1.2"/><path d="M1367.5 791 L1370 794 L1375 787.5" fill="none" stroke="#333" stroke-width="1.2"/><path d="M1293.5 804 L1296 807 L1301 800.5" fill="none" stroke="#333" stroke-width="1.2"/><path d="M1367.5 804 L1370 807 L1375 800.5" fill="none" stroke="#333" stroke-width="1.2"/><path d="M1293.5 817 L1296 820 L1301 813.5" fill="none" stroke="#333" stroke-width="1.2"/><path d="M1367.5 817 L1370 820 L1375 813.5" fill="none" stroke="#333" stroke-width="1.2"/>
</svg>
</body></html>
